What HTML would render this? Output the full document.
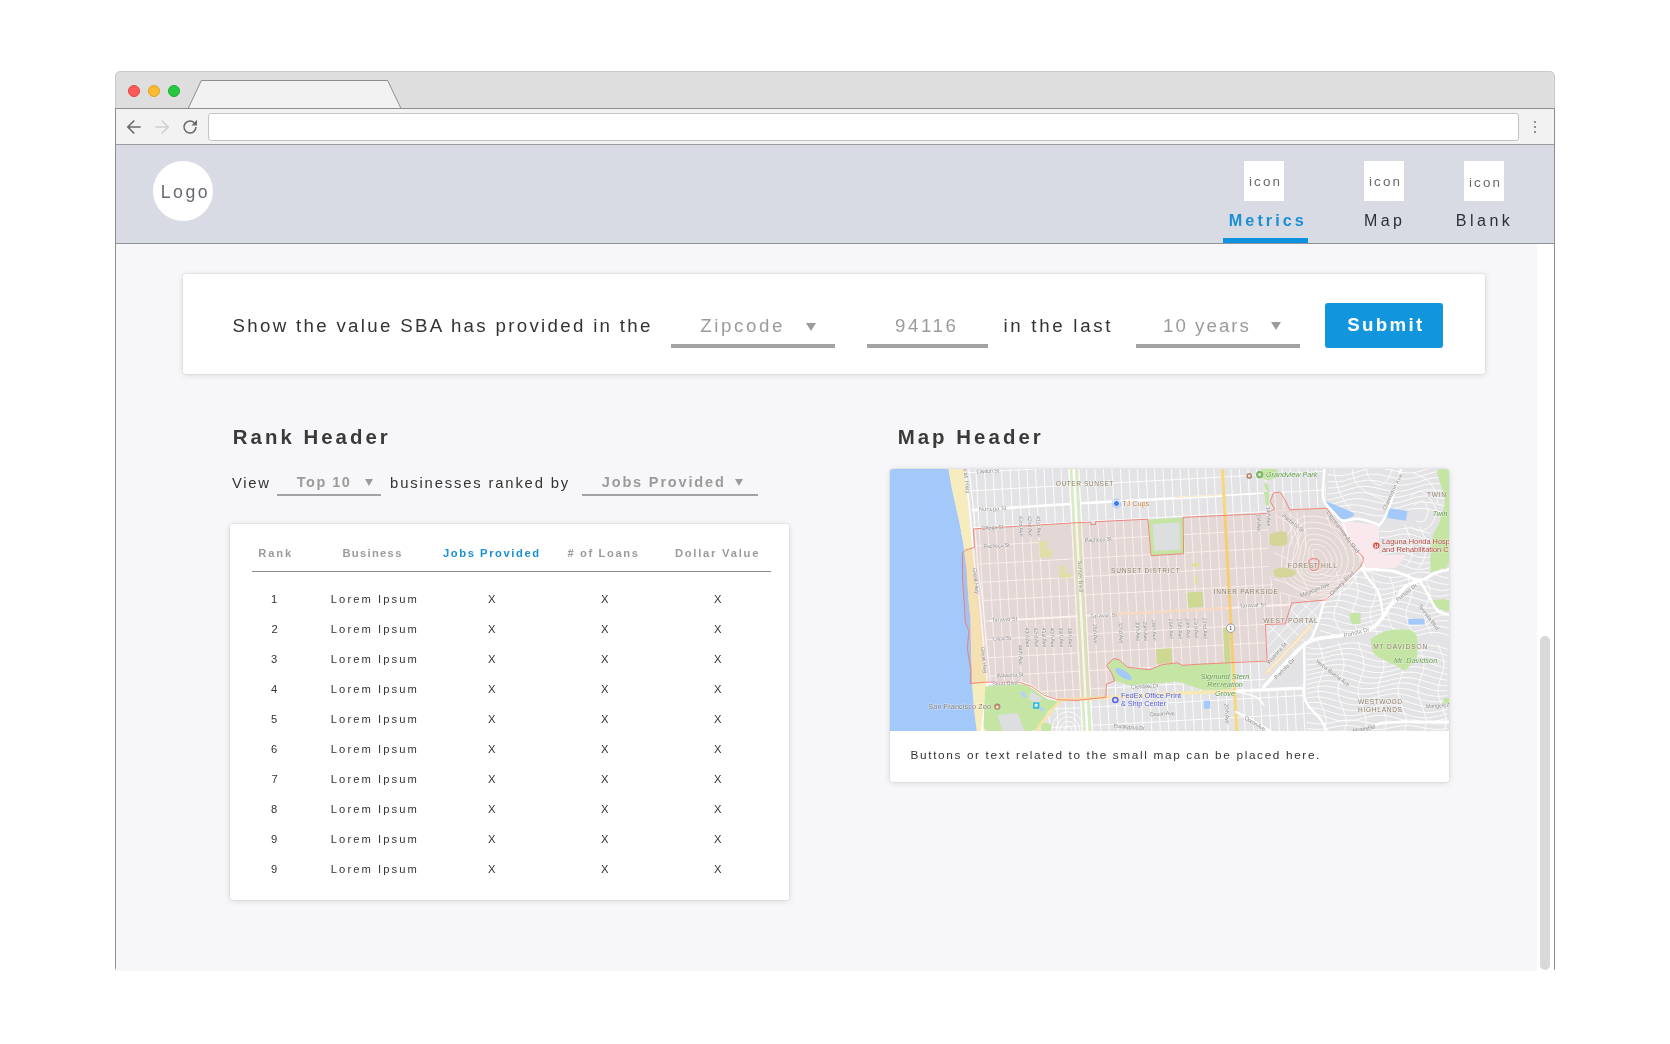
<!DOCTYPE html>
<html lang="en">
<head>
<meta charset="utf-8">
<title>SBA Metrics</title>
<style>
*{box-sizing:border-box;margin:0;padding:0}
html,body{width:1670px;height:1044px;background:#fff;overflow:hidden}
body{position:relative;font-family:"Liberation Sans",sans-serif;color:#333}
.abs{position:absolute}
.t{position:absolute;white-space:nowrap;line-height:1;}
/* browser frame */
#frame{position:absolute;left:115px;top:71px;width:1440px;height:899.6px;background:#f7f7f9;border-radius:5px 5px 2px 4px;overflow:hidden}
#bl,#br{position:absolute;top:37px;width:1px;height:862px;background:#8e8e8e;z-index:5}#bl{left:0}#br{left:1439px}
#tabbar{position:absolute;left:0;top:0;width:1440px;height:38px;background:#dedede;border:1px solid #c9c9c9;border-bottom:0;border-radius:5px 5px 0 0}
#toolbar{position:absolute;left:0;top:37px;width:1440px;height:37px;background:#f2f2f2;border-top:1px solid #8e8e8e;border-bottom:1px solid #9b9b9b}
#url{position:absolute;left:93px;top:4px;width:1311px;height:28px;background:#fff;border:1px solid #c4c4c4;border-radius:3px}
.dot{position:absolute;top:13px;width:12px;height:12px;border-radius:50%}
#nav{position:absolute;left:0;top:74px;width:1440px;height:99px;background:#d8dbe3;border-bottom:1px solid #8f9297}
#logo{position:absolute;left:38px;top:16px;width:60px;height:60px;border-radius:50%;background:#fff}
.ico{position:absolute;top:16px;width:40px;height:40px;background:#fff}
#uline{position:absolute;left:1108px;top:93px;width:85px;height:5px;background:#1093de}
#track{position:absolute;left:1422px;top:173px;width:17px;height:727px;background:#fff}
#thumb{position:absolute;left:1425px;top:565px;width:10px;height:334px;border-radius:5px;background:#d9d9d9}
.card{position:absolute;background:#fff;border-radius:3px;box-shadow:0 1px 6px rgba(0,0,0,.13),0 0 2px rgba(0,0,0,.12)}
.ul{position:absolute;background:#a3a3a3}
.tri{position:absolute;width:0;height:0;border-left:5px solid transparent;border-right:5px solid transparent;border-top:8px solid #9b9b9b}
.tri.s{border-left-width:4px;border-right-width:4px;border-top-width:7px}
#submit{position:absolute;left:1142px;top:29px;width:118px;height:45px;background:#1195dc;border-radius:3px}
</style>
</head>
<body>
<div id="frame">
  <div id="bl"></div><div id="br"></div>
  <div id="tabbar">
    <span class="dot" style="left:12px;background:#fc5b57;border:1px solid #e2443f"></span>
    <span class="dot" style="left:32px;background:#fdbc2e;border:1px solid #e0a028"></span>
    <span class="dot" style="left:52px;background:#27c840;border:1px solid #1fa831"></span>
    <svg class="abs" style="left:59px;top:0" width="240" height="38" viewBox="0 0 240 38"><path d="M13.2 36.5 L26.3 8.5 L212.6 8.5 L226 36.5 L240 36.5 L240 38 L0 38 L0 36.5Z" fill="#f2f2f2"/><path d="M0 36.5 L13.2 36.5 L26.3 8.5 L212.6 8.5 L226 36.5 L240 36.5" fill="none" stroke="#8e8e8e" stroke-width="1"/></svg>
  </div>
  <div id="toolbar">
    <svg class="abs" style="left:8px;top:6px" width="80" height="24" viewBox="0 0 80 24" fill="none" stroke-width="1.6">
      <path d="M17.7 12 H5.3 M11.3 5.5 L4.8 12 L11.3 18.5" stroke="#6a6a6a"/>
      <path d="M32.3 12 H44.7 M38.7 5.5 L45.2 12 L38.7 18.5" stroke="#cfcfcf"/>
      <path d="M71.5 8 A6 6 0 1 0 73 12" stroke="#6a6a6a"/>
      <path d="M74 4.8 V10.6 H68.4 Z" fill="#6a6a6a" stroke="none"/>
    </svg>
    <div id="url"></div>
    <svg class="abs" style="left:1417px;top:8px" width="6" height="20" viewBox="0 0 6 20"><circle cx="3" cy="5" r="1.1" fill="#777"/><circle cx="3" cy="10" r="1.1" fill="#777"/><circle cx="3" cy="15" r="1.1" fill="#777"/></svg>
  </div>
  <div id="nav">
    <div id="logo"></div>
    <div class="ico" style="left:1129px"></div>
    <div class="ico" style="left:1249px"></div>
    <div class="ico" style="left:1349px"></div>
    <div id="uline"></div>
  </div>
  <div id="track"></div>
  <div id="thumb"></div>
  <!-- filter card -->
  <div class="card" id="filter" style="left:68px;top:203px;width:1302px;height:100px">
    <div id="submit"></div>
  </div>
  <div class="card" id="rankcard" style="left:115px;top:453px;width:559px;height:376px"></div>
  <div class="card" id="mapcard" style="left:775px;top:397.5px;width:559px;height:313px;overflow:hidden">
  <svg class="abs" style="left:0;top:0;filter:blur(.35px)" width="559" height="262" viewBox="0 0 559 262" font-family="'Liberation Sans',sans-serif">
<defs>
<clipPath id="gc"><path d="M77.5 0.0 L434.0 0.0 L437.0 39.0 L400.0 41.0 L384.0 42.0 L378.0 48.0 L379.0 100.0 L384.0 120.0 L400.0 128.0 L402.0 134.0 L395.0 155.0 L376.0 156.0 L377.0 193.0 L374.0 222.0 L414.0 221.0 L416.0 262.0 L101.0 262.0 L99.0 214.0 L92.0 131.0 L83.5 60.0Z"/></clipPath>
<clipPath id="mc"><rect width="559" height="262"/></clipPath>
</defs>
<g clip-path="url(#mc)">
<rect width="559" height="262" fill="#e3e3e5"/>
<path d="M0.0 0.0 L58.4 0.0 L62.0 20.0 L65.9 37.7 L70.0 56.0 L73.4 75.3 L76.5 100.0 L78.5 131.0 L80.5 150.0 L81.0 180.0 L82.0 214.0 L84.0 240.0 L86.8 262.0 L0.0 262.0Z" fill="#a3c9fb"/>
<path d="M58.4 0.0 L62.0 20.0 L65.9 37.7 L70.0 56.0 L73.4 75.3 L76.5 100.0 L78.5 131.0 L80.5 150.0 L81.0 180.0 L82.0 214.0 L84.0 240.0 L86.8 262.0 L99.0 262.0 L97.0 214.0 L88.0 131.0 L80.5 60.0 L75.0 0.0Z" fill="#f6ecbe"/>
<path d="M75.3 0.0 L80.0 45.0 L85.0 100.0 L89.5 131.0 L94.0 180.0 L97.5 214.0" stroke="#fff" stroke-width="1.6" fill="none"/>
<path d="M79.0 0.0 L84.0 45.0 L88.0 100.0 L92.5 131.0 L97.0 180.0 L100.5 214.0" stroke="#fff" stroke-width="1.2" fill="none"/>
<path d="M97.5 214.0 C97.1 217.5 95.9 227.0 95.0 235.0 C94.1 243.0 92.5 257.5 92.0 262.0" stroke="#fff" stroke-width="2.2" fill="none"/>
<g clip-path="url(#gc)"><path d="M442.9 0L457.3 262M434.4 0L448.8 262M425.9 0L440.3 262M417.4 0L431.8 262M408.9 0L423.3 262M400.4 0L414.8 262M391.9 0L406.3 262M383.4 0L397.8 262M374.9 0L389.3 262M366.4 0L380.8 262M357.9 0L372.3 262M349.4 0L363.8 262M340.9 0L355.3 262M323.9 0L338.3 262M315.4 0L329.8 262M306.9 0L321.3 262M298.4 0L312.8 262M289.9 0L304.3 262M281.4 0L295.8 262M272.9 0L287.3 262M264.4 0L278.8 262M255.9 0L270.3 262M247.4 0L261.8 262M238.9 0L253.3 262M230.4 0L244.8 262M221.9 0L236.3 262M213.4 0L227.8 262M204.9 0L219.3 262M196.4 0L210.8 262M187.9 0L202.3 262M179.4 0L193.8 262M170.9 0L185.3 262M162.4 0L176.8 262M153.9 0L168.3 262M145.4 0L159.8 262M136.9 0L151.3 262M128.4 0L142.8 262M119.9 0L134.3 262M111.4 0L125.8 262M102.9 0L117.3 262M94.4 0L108.8 262M85.9 0L100.3 262M77.4 0L91.8 262M70 -32.6L440 -52.9M70 4.1L440 -16.2M70 22.4L440 2.1M70 40.9L440 20.6M70 59.4L440 39.1M70 77.8L440 57.5M70 96.1L440 75.8M70 114.4L440 94.1M70 132.8L440 112.5M70 153.3L440 133.0M70 172.1L440 151.8M70 190.4L440 170.1M70 208.7L440 188.4M70 227.0L440 206.7M70 245.3L440 225.0M70 263.6L440 243.3" stroke="#fff" stroke-width="1" fill="none" opacity=".85"/></g>
<path d="M149.1 55.8 L181.6 54.0 L183.6 89.1 L151.1 91.0Z" fill="#e3e3e5"/>
<path d="M159.6 91.9 L183.6 90.5 L184.6 107.4 L160.6 108.8Z" fill="#e3e3e5"/>
<clipPath id="wc"><path d="M378.0 157.0 L396.0 156.0 L403.0 135.0 L436.0 131.0 L430.0 150.0 L422.0 169.0 L415.0 176.0 L377.0 217.0 L377.0 194.0Z"/></clipPath>
<g clip-path="url(#wc)"><path d="M395.6 84.2L320.6 163.7M401.8 90.1L326.8 169.6M408.0 96.0L333.0 175.5M414.2 101.9L339.2 181.4M420.4 107.8L345.4 187.3M426.6 113.7L351.6 193.2M432.8 119.6L357.8 199.1M439.0 125.5L364.0 205.0M445.2 131.4L370.2 210.9M451.4 137.3L376.4 216.8M457.6 143.2L382.6 222.7M463.8 149.1L388.8 228.6M470.0 155.0L395.0 234.5M476.2 160.9L401.2 240.4M482.4 166.8L407.4 246.3M488.6 172.7L413.6 252.2M362.0 140.5L432.0 207.0M371.0 130.9L441.0 197.4M380.0 121.3L450.0 187.8M389.0 111.7L459.0 178.2M398.0 102.1L468.0 168.6M407.0 92.5L477.0 159.0M416.0 82.9L486.0 149.4M425.0 73.3L495.0 139.8M434.0 63.7L504.0 130.2" stroke="#fff" stroke-width="1" fill="none" opacity=".85"/></g>
<clipPath id="rc"><path d="M437.0 0.0 L559.0 0.0 L559.0 262.0 L416.0 262.0 L415.0 176.0 L422.0 169.0 L430.0 150.0 L436.0 131.0 L454.0 114.0 L473.0 93.0 L462.0 76.0 L437.0 39.0Z"/></clipPath>
<clipPath id="fc"><path d="M384.0 42.0 L437.0 39.0 L473.0 90.0 L436.0 131.0 L402.0 134.0 L384.0 120.0 L379.0 100.0 L378.0 48.0Z"/></clipPath>
<g clip-path="url(#rc)"><path id="cvy" d="M438.0 5.5 C439.7 5.7 444.7 6.7 448.0 6.8 C451.3 6.8 454.7 6.3 458.0 5.6 C461.3 4.9 464.7 3.6 468.0 2.6 C471.3 1.7 474.7 0.4 478.0 -0.2 C481.3 -0.8 484.7 -1.2 488.0 -1.1 C491.3 -1.0 494.7 -0.3 498.0 0.4 C501.3 1.0 504.7 2.1 508.0 2.7 C511.3 3.3 514.7 3.9 518.0 4.0 C521.3 4.0 524.7 3.5 528.0 2.8 C531.3 2.1 534.7 0.8 538.0 -0.2 C541.3 -1.1 544.7 -2.4 548.0 -3.0 C551.3 -3.6 556.3 -3.7 558.0 -3.9M438.0 12.4 C439.7 12.5 444.7 13.0 448.0 12.8 C451.3 12.5 454.7 11.6 458.0 10.7 C461.3 9.9 464.7 8.5 468.0 7.6 C471.3 6.6 474.7 5.7 478.0 5.3 C481.3 5.0 484.7 5.1 488.0 5.4 C491.3 5.8 494.7 6.7 498.0 7.4 C501.3 8.1 504.7 9.2 508.0 9.6 C511.3 10.0 514.7 10.2 518.0 10.0 C521.3 9.7 524.7 8.8 528.0 7.9 C531.3 7.1 534.7 5.7 538.0 4.8 C541.3 3.8 544.7 2.9 548.0 2.5 C551.3 2.2 556.3 2.6 558.0 2.6M438.0 19.0 C439.7 18.9 444.7 18.9 448.0 18.4 C451.3 17.8 454.7 16.6 458.0 15.7 C461.3 14.7 464.7 13.4 468.0 12.6 C471.3 11.9 474.7 11.3 478.0 11.2 C481.3 11.1 484.7 11.6 488.0 12.2 C491.3 12.8 494.7 13.9 498.0 14.6 C501.3 15.2 504.7 16.0 508.0 16.2 C511.3 16.4 514.7 16.1 518.0 15.6 C521.3 15.0 524.7 13.8 528.0 12.9 C531.3 11.9 534.7 10.6 538.0 9.8 C541.3 9.1 544.7 8.5 548.0 8.4 C551.3 8.3 556.3 9.2 558.0 9.4M438.0 25.2 C439.7 24.9 444.7 24.4 448.0 23.6 C451.3 22.9 454.7 21.5 458.0 20.6 C461.3 19.6 464.7 18.5 468.0 17.9 C471.3 17.4 474.7 17.3 478.0 17.5 C481.3 17.7 484.7 18.5 488.0 19.2 C491.3 19.9 494.7 21.0 498.0 21.5 C501.3 22.1 504.7 22.5 508.0 22.4 C511.3 22.3 514.7 21.6 518.0 20.8 C521.3 20.1 524.7 18.7 528.0 17.8 C531.3 16.8 534.7 15.7 538.0 15.1 C541.3 14.6 544.7 14.5 548.0 14.7 C551.3 14.9 556.3 16.1 558.0 16.4M438.0 31.0 C439.7 30.6 444.7 29.6 448.0 28.7 C451.3 27.8 454.7 26.4 458.0 25.5 C461.3 24.7 464.7 23.9 468.0 23.6 C471.3 23.4 474.7 23.7 478.0 24.1 C481.3 24.6 484.7 25.6 488.0 26.3 C491.3 27.0 494.7 28.0 498.0 28.3 C501.3 28.6 504.7 28.6 508.0 28.2 C511.3 27.8 514.7 26.8 518.0 25.9 C521.3 25.0 524.7 23.6 528.0 22.7 C531.3 21.9 534.7 21.1 538.0 20.8 C541.3 20.6 544.7 20.9 548.0 21.3 C551.3 21.8 556.3 23.2 558.0 23.5M438.0 36.5 C439.7 36.0 444.7 34.5 448.0 33.6 C451.3 32.6 454.7 31.3 458.0 30.7 C461.3 30.0 464.7 29.6 468.0 29.7 C471.3 29.7 474.7 30.4 478.0 31.0 C481.3 31.6 484.7 32.8 488.0 33.4 C491.3 34.0 494.7 34.7 498.0 34.7 C501.3 34.8 504.7 34.3 508.0 33.7 C511.3 33.0 514.7 31.7 518.0 30.8 C521.3 29.8 524.7 28.5 528.0 27.9 C531.3 27.2 534.7 26.8 538.0 26.9 C541.3 26.9 544.7 27.6 548.0 28.2 C551.3 28.8 556.3 30.2 558.0 30.6M438.0 41.6 C439.7 41.1 444.7 39.4 448.0 38.5 C451.3 37.6 454.7 36.6 458.0 36.2 C461.3 35.8 464.7 35.8 468.0 36.1 C471.3 36.4 474.7 37.4 478.0 38.1 C481.3 38.8 484.7 39.9 488.0 40.3 C491.3 40.8 494.7 41.0 498.0 40.8 C501.3 40.5 504.7 39.7 508.0 38.8 C511.3 38.0 514.7 36.6 518.0 35.7 C521.3 34.8 524.7 33.8 528.0 33.4 C531.3 33.0 534.7 33.0 538.0 33.3 C541.3 33.6 544.7 34.6 548.0 35.3 C551.3 36.0 556.3 37.1 558.0 37.5M438.0 46.6 C439.7 46.1 444.7 44.3 448.0 43.5 C451.3 42.8 454.7 42.1 458.0 42.0 C461.3 41.9 464.7 42.4 468.0 42.9 C471.3 43.4 474.7 44.5 478.0 45.2 C481.3 45.9 484.7 46.7 488.0 46.9 C491.3 47.1 494.7 47.0 498.0 46.4 C501.3 45.9 504.7 44.8 508.0 43.8 C511.3 42.9 514.7 41.5 518.0 40.7 C521.3 40.0 524.7 39.3 528.0 39.2 C531.3 39.1 534.7 39.6 538.0 40.1 C541.3 40.6 544.7 41.7 548.0 42.4 C551.3 43.1 556.3 43.8 558.0 44.1M462.0 0.0 C462.7 2.3 463.3 10.0 466.0 14.0 C468.7 18.0 473.7 21.3 478.0 24.0 C482.3 26.7 488.3 27.7 492.0 30.0 C495.7 32.3 498.7 36.7 500.0 38.0M444.0 0.0 C444.5 2.7 445.7 11.3 447.0 16.0 C448.3 20.7 449.8 24.0 452.0 28.0 C454.2 32.0 458.7 38.0 460.0 40.0M476.0 0.0 C476.7 1.7 477.7 7.3 480.0 10.0 C482.3 12.7 487.0 16.0 490.0 16.0 C493.0 16.0 496.0 12.7 498.0 10.0 C500.0 7.3 501.3 1.7 502.0 0.0M520.0 28.0 C521.7 27.0 526.7 21.7 530.0 22.0 C533.3 22.3 537.3 26.7 540.0 30.0 C542.7 33.3 545.8 37.7 546.0 42.0 C546.2 46.3 543.7 52.7 541.0 56.0 C538.3 59.3 533.3 61.7 530.0 62.0 C526.7 62.3 522.5 58.7 521.0 58.0M524.0 36.0 C525.5 35.3 530.7 31.0 533.0 32.0 C535.3 33.0 537.8 38.7 538.0 42.0 C538.2 45.3 536.0 50.3 534.0 52.0 C532.0 53.7 527.3 52.0 526.0 52.0M524.0 4.0 C526.0 5.0 532.7 7.3 536.0 10.0 C539.3 12.7 542.0 16.0 544.0 20.0 C546.0 24.0 547.3 31.7 548.0 34.0M490.0 62.1 C491.7 62.2 496.7 62.8 500.0 62.4 C503.3 62.1 506.7 60.7 510.0 60.1 C513.3 59.5 516.7 58.8 520.0 59.0 C523.3 59.2 526.7 60.4 530.0 61.4 C533.3 62.3 538.3 64.1 540.0 64.6M490.0 68.4 C491.7 68.3 496.7 68.3 500.0 67.8 C503.3 67.3 506.7 65.8 510.0 65.3 C513.3 64.9 516.7 64.7 520.0 65.2 C523.3 65.7 526.7 67.3 530.0 68.2 C533.3 69.2 538.3 70.5 540.0 70.9M490.0 74.5 C491.7 74.2 496.7 73.6 500.0 73.0 C503.3 72.3 506.7 71.0 510.0 70.8 C513.3 70.6 516.7 71.0 520.0 71.7 C523.3 72.4 526.7 74.2 530.0 75.1 C533.3 76.0 538.3 76.7 540.0 77.0M490.0 80.2 C491.7 79.9 496.7 78.7 500.0 78.1 C503.3 77.5 506.7 76.5 510.0 76.5 C513.3 76.6 516.7 77.5 520.0 78.4 C523.3 79.3 526.7 81.1 530.0 81.8 C533.3 82.5 538.3 82.6 540.0 82.7M490.0 85.7 C491.7 85.3 496.7 83.8 500.0 83.3 C503.3 82.7 506.7 82.2 510.0 82.6 C513.3 82.9 516.7 84.3 520.0 85.2 C523.3 86.2 526.7 87.8 530.0 88.3 C533.3 88.8 538.3 88.2 540.0 88.2M490.0 91.0 C491.7 90.6 496.7 88.9 500.0 88.6 C503.3 88.2 506.7 88.3 510.0 88.9 C513.3 89.5 516.7 91.1 520.0 92.1 C523.3 93.0 526.7 94.3 530.0 94.5 C533.3 94.7 538.3 93.6 540.0 93.5M490.0 96.1 C491.7 95.8 496.7 94.3 500.0 94.2 C503.3 94.0 506.7 94.7 510.0 95.4 C513.3 96.2 516.7 98.1 520.0 98.9 C523.3 99.7 526.7 100.5 530.0 100.4 C533.3 100.4 538.3 98.9 540.0 98.6M515.0 56.0 C515.8 58.3 518.8 65.0 520.0 70.0 C521.2 75.0 522.7 81.3 522.0 86.0 C521.3 90.7 517.0 96.0 516.0 98.0M530.0 58.0 C531.0 60.7 535.3 68.7 536.0 74.0 C536.7 79.3 535.3 85.7 534.0 90.0 C532.7 94.3 529.0 98.3 528.0 100.0M423.5 89.5 C423.3 88.1 421.2 82.2 422.5 81.0 C423.8 79.8 428.6 80.2 431.0 82.0 C433.4 83.8 436.6 88.5 437.0 91.5 C437.4 94.5 435.7 98.2 433.5 100.0 C431.3 101.8 426.2 102.6 424.0 102.5 C421.8 102.4 420.1 101.7 420.0 99.5 C419.9 97.3 422.9 91.2 423.5 89.5M419.0 87.0 C419.3 85.2 418.5 77.5 421.0 76.0 C423.5 74.5 430.5 75.5 434.0 78.0 C437.5 80.5 441.5 86.8 442.0 91.0 C442.5 95.2 440.0 100.5 437.0 103.0 C434.0 105.5 427.5 106.3 424.0 106.0 C420.5 105.7 416.8 104.2 416.0 101.0 C415.2 97.8 418.5 89.3 419.0 87.0M414.5 84.5 C415.3 82.2 415.8 72.8 419.5 71.0 C423.2 69.2 432.4 70.8 437.0 74.0 C441.6 77.2 446.4 85.2 447.0 90.5 C447.6 95.8 444.3 102.8 440.5 106.0 C436.7 109.2 428.8 110.1 424.0 109.5 C419.2 108.9 413.6 106.7 412.0 102.5 C410.4 98.3 414.1 87.5 414.5 84.5M410.0 82.0 C411.3 79.3 413.0 68.0 418.0 66.0 C423.0 64.0 434.3 66.0 440.0 70.0 C445.7 74.0 451.3 83.5 452.0 90.0 C452.7 96.5 448.7 105.2 444.0 109.0 C439.3 112.8 430.0 113.8 424.0 113.0 C418.0 112.2 410.3 109.2 408.0 104.0 C405.7 98.8 409.7 85.7 410.0 82.0M404.6 79.0 C406.5 75.8 409.7 62.3 416.2 60.0 C422.7 57.7 436.6 60.3 443.6 65.2 C450.6 70.1 457.2 81.5 458.0 89.4 C458.8 97.3 453.9 108.0 448.2 112.6 C442.5 117.2 431.5 118.3 424.0 117.2 C416.5 116.1 406.4 112.2 403.2 105.8 C400.0 99.4 404.4 83.5 404.6 79.0M399.2 76.0 C401.7 72.3 406.4 56.6 414.4 54.0 C422.4 51.4 438.9 54.6 447.2 60.4 C455.5 66.2 463.1 79.5 464.0 88.8 C464.9 98.1 459.1 110.8 452.4 116.2 C445.7 121.6 433.0 122.8 424.0 121.4 C415.0 120.0 402.5 115.2 398.4 107.6 C394.3 100.0 399.1 81.3 399.2 76.0M393.8 73.0 C396.9 68.8 403.1 50.9 412.6 48.0 C422.1 45.1 441.2 48.9 450.8 55.6 C460.4 62.3 469.0 77.5 470.0 88.2 C471.0 98.9 464.3 113.6 456.6 119.8 C448.9 126.0 434.5 127.3 424.0 125.6 C413.5 123.9 398.6 118.2 393.6 109.4 C388.6 100.6 393.8 79.1 393.8 73.0M388.0 48.0 C389.3 48.7 393.3 49.7 396.0 52.0 C398.7 54.3 402.0 58.0 404.0 62.0 C406.0 66.0 408.0 71.3 408.0 76.0 C408.0 80.7 406.0 86.3 404.0 90.0 C402.0 93.7 397.3 96.7 396.0 98.0M398.0 44.0 C399.7 45.3 405.0 48.7 408.0 52.0 C411.0 55.3 414.7 62.0 416.0 64.0M384.0 84.0 C385.7 84.7 390.7 86.0 394.0 88.0 C397.3 90.0 401.0 92.7 404.0 96.0 C407.0 99.3 409.7 104.0 412.0 108.0 C414.3 112.0 417.0 118.0 418.0 120.0M384.0 110.0 C386.0 110.7 391.7 112.3 396.0 114.0 C400.3 115.7 405.3 117.7 410.0 120.0 C414.7 122.3 421.7 126.7 424.0 128.0M392.0 124.0 C394.3 124.7 401.3 126.7 406.0 128.0 C410.7 129.3 417.7 131.3 420.0 132.0M436.0 44.0 C436.7 46.0 438.0 52.3 440.0 56.0 C442.0 59.7 445.3 62.0 448.0 66.0 C450.7 70.0 454.7 77.7 456.0 80.0M386.0 44L388.0 70M393.0 44L395.0 73M400.0 44L402.0 76M407.0 44L409.0 79M414.0 44L416.0 82M430.0 104.9 C431.7 105.3 436.7 106.9 440.0 107.1 C443.3 107.4 446.7 107.0 450.0 106.4 C453.3 105.9 456.7 104.5 460.0 103.7 C463.3 103.0 466.7 102.0 470.0 101.9 C473.3 101.7 476.7 102.3 480.0 103.0 C483.3 103.7 486.7 105.2 490.0 106.1 C493.3 107.0 496.7 108.1 500.0 108.3 C503.3 108.6 506.7 108.2 510.0 107.6 C513.3 107.1 516.7 105.7 520.0 104.9 C523.3 104.2 526.7 103.2 530.0 103.1 C533.3 102.9 536.7 103.5 540.0 104.2 C543.3 104.9 546.7 106.4 550.0 107.3 C553.3 108.2 558.3 109.2 560.0 109.5M430.0 112.2 C431.7 112.3 436.7 113.3 440.0 113.1 C443.3 112.9 446.7 111.9 450.0 111.1 C453.3 110.4 456.7 109.0 460.0 108.4 C463.3 107.9 466.7 107.6 470.0 107.9 C473.3 108.2 476.7 109.4 480.0 110.3 C483.3 111.2 486.7 112.7 490.0 113.4 C493.3 114.0 496.7 114.5 500.0 114.3 C503.3 114.1 506.7 113.1 510.0 112.3 C513.3 111.6 516.7 110.2 520.0 109.6 C523.3 109.1 526.7 108.8 530.0 109.1 C533.3 109.4 536.7 110.6 540.0 111.5 C543.3 112.4 546.7 113.9 550.0 114.6 C553.3 115.2 558.3 115.3 560.0 115.5M430.0 118.9 C431.7 118.8 436.7 118.9 440.0 118.3 C443.3 117.8 446.7 116.4 450.0 115.6 C453.3 114.9 456.7 113.9 460.0 113.7 C463.3 113.5 466.7 114.0 470.0 114.7 C473.3 115.3 476.7 116.8 480.0 117.8 C483.3 118.7 486.7 119.8 490.0 120.1 C493.3 120.4 496.7 120.1 500.0 119.5 C503.3 119.0 506.7 117.6 510.0 116.8 C513.3 116.1 516.7 115.1 520.0 114.9 C523.3 114.7 526.7 115.2 530.0 115.9 C533.3 116.5 536.7 118.0 540.0 119.0 C543.3 119.9 546.7 121.0 550.0 121.3 C553.3 121.6 558.3 120.8 560.0 120.7M430.0 124.9 C431.7 124.6 436.7 123.8 440.0 123.1 C443.3 122.3 446.7 120.9 450.0 120.3 C453.3 119.8 456.7 119.4 460.0 119.7 C463.3 119.9 466.7 121.0 470.0 121.9 C473.3 122.8 476.7 124.4 480.0 125.1 C483.3 125.7 486.7 126.3 490.0 126.1 C493.3 126.0 496.7 125.0 500.0 124.3 C503.3 123.5 506.7 122.1 510.0 121.5 C513.3 121.0 516.7 120.6 520.0 120.9 C523.3 121.1 526.7 122.2 530.0 123.1 C533.3 124.0 536.7 125.6 540.0 126.3 C543.3 126.9 546.7 127.5 550.0 127.3 C553.3 127.2 558.3 125.8 560.0 125.5M430.0 130.2 C431.7 129.8 436.7 128.4 440.0 127.6 C443.3 126.8 446.7 125.8 450.0 125.6 C453.3 125.3 456.7 125.7 460.0 126.4 C463.3 127.0 466.7 128.5 470.0 129.4 C473.3 130.3 476.7 131.5 480.0 131.8 C483.3 132.2 486.7 131.9 490.0 131.4 C493.3 130.9 496.7 129.6 500.0 128.8 C503.3 128.0 506.7 127.0 510.0 126.8 C513.3 126.5 516.7 126.9 520.0 127.6 C523.3 128.2 526.7 129.7 530.0 130.6 C533.3 131.5 536.7 132.7 540.0 133.0 C543.3 133.4 546.7 133.1 550.0 132.6 C553.3 132.1 558.3 130.4 560.0 130.0M430.0 135.0 C431.7 134.5 436.7 132.8 440.0 132.3 C443.3 131.7 446.7 131.2 450.0 131.4 C453.3 131.7 456.7 132.7 460.0 133.6 C463.3 134.5 466.7 136.0 470.0 136.7 C473.3 137.5 476.7 138.0 480.0 138.0 C483.3 137.9 486.7 137.0 490.0 136.2 C493.3 135.5 496.7 134.0 500.0 133.5 C503.3 132.9 506.7 132.4 510.0 132.6 C513.3 132.9 516.7 133.9 520.0 134.8 C523.3 135.7 526.7 137.2 530.0 137.9 C533.3 138.7 536.7 139.2 540.0 139.2 C543.3 139.1 546.7 138.2 550.0 137.4 C553.3 136.7 558.3 135.1 560.0 134.7M430.0 139.5 C431.7 139.2 436.7 137.6 440.0 137.4 C443.3 137.2 446.7 137.5 450.0 138.1 C453.3 138.7 456.7 140.2 460.0 141.1 C463.3 142.0 466.7 143.2 470.0 143.6 C473.3 144.0 476.7 143.8 480.0 143.3 C483.3 142.8 486.7 141.5 490.0 140.7 C493.3 139.9 496.7 138.8 500.0 138.6 C503.3 138.4 506.7 138.7 510.0 139.3 C513.3 139.9 516.7 141.4 520.0 142.3 C523.3 143.2 526.7 144.4 530.0 144.8 C533.3 145.2 536.7 145.0 540.0 144.5 C543.3 144.0 546.7 142.7 550.0 141.9 C553.3 141.1 558.3 140.2 560.0 139.8M430.0 144.2 C431.7 144.0 436.7 143.0 440.0 143.2 C443.3 143.4 446.7 144.4 450.0 145.3 C453.3 146.1 456.7 147.7 460.0 148.4 C463.3 149.2 466.7 149.8 470.0 149.8 C473.3 149.7 476.7 148.9 480.0 148.1 C483.3 147.4 486.7 146.0 490.0 145.4 C493.3 144.7 496.7 144.2 500.0 144.4 C503.3 144.6 506.7 145.6 510.0 146.5 C513.3 147.3 516.7 148.9 520.0 149.6 C523.3 150.4 526.7 151.0 530.0 151.0 C533.3 150.9 536.7 150.1 540.0 149.3 C543.3 148.6 546.7 147.2 550.0 146.6 C553.3 145.9 558.3 145.8 560.0 145.6M430.0 149.3 C431.7 149.3 436.7 149.2 440.0 149.8 C443.3 150.4 446.7 151.8 450.0 152.7 C453.3 153.7 456.7 154.9 460.0 155.3 C463.3 155.8 466.7 155.7 470.0 155.2 C473.3 154.8 476.7 153.5 480.0 152.7 C483.3 151.9 486.7 150.7 490.0 150.5 C493.3 150.2 496.7 150.4 500.0 151.0 C503.3 151.6 506.7 153.0 510.0 153.9 C513.3 154.9 516.7 156.1 520.0 156.5 C523.3 157.0 526.7 156.9 530.0 156.4 C533.3 156.0 536.7 154.7 540.0 153.9 C543.3 153.1 546.7 151.9 550.0 151.7 C553.3 151.4 558.3 152.1 560.0 152.2M430.0 155.0 C431.7 155.3 436.7 156.1 440.0 156.9 C443.3 157.8 446.7 159.3 450.0 160.1 C453.3 160.9 456.7 161.6 460.0 161.6 C463.3 161.6 466.7 160.8 470.0 160.1 C473.3 159.3 476.7 157.9 480.0 157.3 C483.3 156.6 486.7 156.1 490.0 156.2 C493.3 156.4 496.7 157.3 500.0 158.1 C503.3 159.0 506.7 160.5 510.0 161.3 C513.3 162.1 516.7 162.8 520.0 162.8 C523.3 162.8 526.7 162.0 530.0 161.3 C533.3 160.5 536.7 159.1 540.0 158.5 C543.3 157.8 546.7 157.3 550.0 157.4 C553.3 157.6 558.3 159.0 560.0 159.3M430.0 161.5 C431.7 162.0 436.7 163.5 440.0 164.4 C443.3 165.3 446.7 166.6 450.0 167.1 C453.3 167.5 456.7 167.5 460.0 167.1 C463.3 166.7 466.7 165.4 470.0 164.6 C473.3 163.8 476.7 162.6 480.0 162.3 C483.3 162.0 486.7 162.2 490.0 162.7 C493.3 163.2 496.7 164.7 500.0 165.6 C503.3 166.5 506.7 167.8 510.0 168.3 C513.3 168.7 516.7 168.7 520.0 168.3 C523.3 167.9 526.7 166.6 530.0 165.8 C533.3 165.0 536.7 163.8 540.0 163.5 C543.3 163.2 546.7 163.4 550.0 163.9 C553.3 164.4 558.3 166.3 560.0 166.8M446.0 102.0 C446.7 105.7 450.3 116.7 450.0 124.0 C449.7 131.3 443.7 139.0 444.0 146.0 C444.3 153.0 450.7 162.7 452.0 166.0M464.0 104.0 C464.7 107.3 468.3 117.0 468.0 124.0 C467.7 131.0 461.7 139.0 462.0 146.0 C462.3 153.0 468.7 162.7 470.0 166.0M482.0 106.0 C482.7 109.0 486.3 117.3 486.0 124.0 C485.7 130.7 479.7 139.0 480.0 146.0 C480.3 153.0 486.7 162.7 488.0 166.0M500.0 108.0 C500.7 110.7 504.3 117.7 504.0 124.0 C503.7 130.3 497.7 139.0 498.0 146.0 C498.3 153.0 504.7 162.7 506.0 166.0M518.0 110.0 C518.7 112.3 522.3 118.0 522.0 124.0 C521.7 130.0 515.7 139.0 516.0 146.0 C516.3 153.0 522.7 162.7 524.0 166.0M536.0 112.0 C536.7 114.0 540.3 118.3 540.0 124.0 C539.7 129.7 533.7 139.0 534.0 146.0 C534.3 153.0 540.7 162.7 542.0 166.0M417.0 178.5 C418.7 178.7 423.7 179.8 427.0 179.8 C430.3 179.8 433.7 179.3 437.0 178.8 C440.3 178.2 443.7 177.1 447.0 176.3 C450.3 175.5 453.7 174.6 457.0 174.2 C460.3 173.9 463.7 173.8 467.0 174.1 C470.3 174.5 473.7 175.4 477.0 176.3 C480.3 177.1 483.7 178.5 487.0 179.4 C490.3 180.3 493.7 181.3 497.0 181.7 C500.3 182.1 503.7 182.1 507.0 181.8 C510.3 181.5 513.7 180.6 517.0 179.9 C520.3 179.1 523.7 178.0 527.0 177.4 C530.3 176.7 533.7 176.2 537.0 176.1 C540.3 176.1 543.7 176.6 547.0 177.2 C550.3 177.9 555.3 179.6 557.0 180.1M417.0 184.6 C418.7 184.7 423.7 185.3 427.0 185.1 C430.3 184.9 433.7 184.1 437.0 183.4 C440.3 182.6 443.7 181.5 447.0 180.8 C450.3 180.1 453.7 179.4 457.0 179.3 C460.3 179.2 463.7 179.5 467.0 180.1 C470.3 180.6 473.7 181.8 477.0 182.8 C480.3 183.7 483.7 185.0 487.0 185.8 C490.3 186.6 493.7 187.3 497.0 187.4 C500.3 187.5 503.7 187.2 507.0 186.7 C510.3 186.2 513.7 185.1 517.0 184.3 C520.3 183.5 523.7 182.5 527.0 182.1 C530.3 181.6 533.7 181.4 537.0 181.6 C540.3 181.9 543.7 182.7 547.0 183.5 C550.3 184.3 555.3 186.1 557.0 186.6M417.0 190.4 C418.7 190.4 423.7 190.5 427.0 190.0 C430.3 189.6 433.7 188.6 437.0 187.8 C440.3 187.1 443.7 186.0 447.0 185.5 C450.3 184.9 453.7 184.6 457.0 184.7 C460.3 184.8 463.7 185.5 467.0 186.3 C470.3 187.0 473.7 188.3 477.0 189.3 C480.3 190.3 483.7 191.4 487.0 192.0 C490.3 192.6 493.7 192.9 497.0 192.8 C500.3 192.7 503.7 192.0 507.0 191.3 C510.3 190.7 513.7 189.5 517.0 188.8 C520.3 188.1 523.7 187.3 527.0 187.0 C530.3 186.8 533.7 187.0 537.0 187.5 C540.3 187.9 543.7 189.0 547.0 189.9 C550.3 190.9 555.3 192.5 557.0 193.1M417.0 196.0 C418.7 195.8 423.7 195.4 427.0 194.8 C430.3 194.2 433.7 193.0 437.0 192.3 C440.3 191.5 443.7 190.6 447.0 190.3 C450.3 190.0 453.7 190.0 457.0 190.4 C460.3 190.8 463.7 191.8 467.0 192.7 C470.3 193.6 473.7 194.9 477.0 195.8 C480.3 196.7 483.7 197.6 487.0 198.0 C490.3 198.3 493.7 198.2 497.0 197.9 C500.3 197.5 503.7 196.6 507.0 195.8 C510.3 195.1 513.7 194.0 517.0 193.4 C520.3 192.8 523.7 192.3 527.0 192.3 C530.3 192.3 533.7 192.9 537.0 193.6 C540.3 194.3 543.7 195.5 547.0 196.5 C550.3 197.5 555.3 198.9 557.0 199.4M417.0 201.2 C418.7 200.9 423.7 200.1 427.0 199.3 C430.3 198.6 433.7 197.5 437.0 196.8 C440.3 196.2 443.7 195.5 447.0 195.5 C450.3 195.4 453.7 195.8 457.0 196.4 C460.3 197.0 463.7 198.2 467.0 199.2 C470.3 200.1 473.7 201.4 477.0 202.2 C480.3 202.9 483.7 203.5 487.0 203.6 C490.3 203.7 493.7 203.3 497.0 202.7 C500.3 202.2 503.7 201.1 507.0 200.3 C510.3 199.5 513.7 198.5 517.0 198.1 C520.3 197.7 523.7 197.6 527.0 197.9 C530.3 198.2 533.7 199.0 537.0 199.9 C540.3 200.7 543.7 202.1 547.0 203.0 C550.3 203.9 555.3 205.0 557.0 205.4M417.0 206.1 C418.7 205.7 423.7 204.6 427.0 203.8 C430.3 203.0 433.7 202.0 437.0 201.5 C440.3 201.0 443.7 200.7 447.0 200.9 C450.3 201.1 453.7 201.8 457.0 202.6 C460.3 203.4 463.7 204.8 467.0 205.7 C470.3 206.7 473.7 207.8 477.0 208.3 C480.3 208.9 483.7 209.1 487.0 208.9 C490.3 208.8 493.7 208.0 497.0 207.3 C500.3 206.6 503.7 205.5 507.0 204.8 C510.3 204.1 513.7 203.3 517.0 203.2 C520.3 203.0 523.7 203.2 527.0 203.8 C530.3 204.3 533.7 205.4 537.0 206.4 C540.3 207.3 543.7 208.6 547.0 209.4 C550.3 210.2 555.3 210.9 557.0 211.2M417.0 210.8 C418.7 210.4 423.7 209.0 427.0 208.3 C430.3 207.5 433.7 206.7 437.0 206.4 C440.3 206.2 443.7 206.2 447.0 206.7 C450.3 207.1 453.7 208.1 457.0 209.1 C460.3 210.0 463.7 211.3 467.0 212.2 C470.3 213.1 473.7 213.9 477.0 214.2 C480.3 214.5 483.7 214.4 487.0 214.0 C490.3 213.6 493.7 212.6 497.0 211.8 C500.3 211.1 503.7 210.0 507.0 209.4 C510.3 208.9 513.7 208.4 517.0 208.5 C520.3 208.6 523.7 209.2 527.0 209.9 C530.3 210.6 533.7 211.9 537.0 212.9 C540.3 213.9 543.7 215.1 547.0 215.7 C550.3 216.3 555.3 216.5 557.0 216.6M417.0 215.3 C418.7 214.9 423.7 213.5 427.0 212.8 C430.3 212.2 433.7 211.7 437.0 211.6 C440.3 211.6 443.7 212.1 447.0 212.7 C450.3 213.4 453.7 214.6 457.0 215.6 C460.3 216.6 463.7 217.8 467.0 218.5 C470.3 219.2 473.7 219.8 477.0 219.8 C480.3 219.8 483.7 219.3 487.0 218.7 C490.3 218.2 493.7 217.0 497.0 216.3 C500.3 215.5 503.7 214.6 507.0 214.2 C510.3 213.9 513.7 213.8 517.0 214.1 C520.3 214.5 523.7 215.4 527.0 216.3 C530.3 217.2 533.7 218.5 537.0 219.4 C540.3 220.3 543.7 221.3 547.0 221.7 C550.3 222.1 555.3 221.8 557.0 221.8M417.0 219.8 C418.7 219.4 423.7 218.0 427.0 217.6 C430.3 217.1 433.7 216.9 437.0 217.1 C440.3 217.4 443.7 218.2 447.0 219.0 C450.3 219.8 453.7 221.2 457.0 222.1 C460.3 223.1 463.7 224.1 467.0 224.6 C470.3 225.1 473.7 225.3 477.0 225.1 C480.3 224.8 483.7 224.0 487.0 223.3 C490.3 222.6 493.7 221.5 497.0 220.8 C500.3 220.1 503.7 219.4 507.0 219.3 C510.3 219.2 513.7 219.5 517.0 220.1 C520.3 220.7 523.7 221.8 527.0 222.8 C530.3 223.7 533.7 225.0 537.0 225.8 C540.3 226.6 543.7 227.3 547.0 227.4 C550.3 227.5 555.3 226.8 557.0 226.7M417.0 224.3 C418.7 224.0 423.7 222.8 427.0 222.5 C430.3 222.3 433.7 222.5 437.0 223.0 C440.3 223.5 443.7 224.5 447.0 225.5 C450.3 226.4 453.7 227.8 457.0 228.6 C460.3 229.4 463.7 230.2 467.0 230.5 C470.3 230.7 473.7 230.5 477.0 230.0 C480.3 229.6 483.7 228.6 487.0 227.8 C490.3 227.0 493.7 226.0 497.0 225.4 C500.3 224.9 503.7 224.6 507.0 224.7 C510.3 224.8 513.7 225.5 517.0 226.3 C520.3 227.0 523.7 228.4 527.0 229.3 C530.3 230.3 533.7 231.4 537.0 232.0 C540.3 232.6 543.7 232.9 547.0 232.8 C550.3 232.7 555.3 231.6 557.0 231.3M417.0 228.9 C418.7 228.7 423.7 227.8 427.0 227.8 C430.3 227.8 433.7 228.4 437.0 229.1 C440.3 229.8 443.7 231.0 447.0 232.0 C450.3 233.0 453.7 234.2 457.0 234.9 C460.3 235.5 463.7 236.0 467.0 236.0 C470.3 236.0 473.7 235.4 477.0 234.8 C480.3 234.2 483.7 233.0 487.0 232.3 C490.3 231.5 493.7 230.6 497.0 230.3 C500.3 230.0 503.7 230.0 507.0 230.4 C510.3 230.8 513.7 231.8 517.0 232.7 C520.3 233.6 523.7 234.9 527.0 235.8 C530.3 236.7 533.7 237.6 537.0 238.0 C540.3 238.3 543.7 238.2 547.0 237.9 C550.3 237.5 555.3 236.2 557.0 235.8M417.0 233.6 C418.7 233.6 423.7 233.1 427.0 233.4 C430.3 233.7 433.7 234.5 437.0 235.4 C440.3 236.3 443.7 237.6 447.0 238.5 C450.3 239.5 453.7 240.5 457.0 240.9 C460.3 241.4 463.7 241.4 467.0 241.2 C470.3 240.9 473.7 240.1 477.0 239.3 C480.3 238.6 483.7 237.4 487.0 236.8 C490.3 236.2 493.7 235.5 497.0 235.5 C500.3 235.4 503.7 235.8 507.0 236.4 C510.3 237.0 513.7 238.2 517.0 239.2 C520.3 240.2 523.7 241.4 527.0 242.2 C530.3 242.9 533.7 243.5 537.0 243.6 C540.3 243.7 543.7 243.3 547.0 242.7 C550.3 242.1 555.3 240.7 557.0 240.3M417.0 238.7 C418.7 238.8 423.7 238.7 427.0 239.3 C430.3 239.8 433.7 240.9 437.0 241.9 C440.3 242.8 443.7 244.2 447.0 245.0 C450.3 245.8 453.7 246.5 457.0 246.7 C460.3 246.9 463.7 246.6 467.0 246.1 C470.3 245.6 473.7 244.6 477.0 243.8 C480.3 243.0 483.7 242.0 487.0 241.5 C490.3 241.0 493.7 240.7 497.0 240.9 C500.3 241.1 503.7 241.8 507.0 242.6 C510.3 243.5 513.7 244.8 517.0 245.7 C520.3 246.7 523.7 247.8 527.0 248.3 C530.3 248.9 533.7 249.1 537.0 248.9 C540.3 248.8 543.7 248.0 547.0 247.3 C550.3 246.6 555.3 245.2 557.0 244.8M417.0 244.0 C418.7 244.2 423.7 244.7 427.0 245.4 C430.3 246.2 433.7 247.5 437.0 248.4 C440.3 249.4 443.7 250.6 447.0 251.2 C450.3 251.8 453.7 252.2 457.0 252.1 C460.3 252.1 463.7 251.4 467.0 250.8 C470.3 250.1 473.7 249.0 477.0 248.3 C480.3 247.5 483.7 246.7 487.0 246.4 C490.3 246.2 493.7 246.2 497.0 246.7 C500.3 247.1 503.7 248.2 507.0 249.1 C510.3 250.0 513.7 251.4 517.0 252.2 C520.3 253.1 523.7 253.9 527.0 254.2 C530.3 254.5 533.7 254.4 537.0 254.0 C540.3 253.6 543.7 252.6 547.0 251.8 C550.3 251.0 555.3 249.8 557.0 249.4M417.0 253.4 C418.7 253.6 423.7 254.7 427.0 254.9 C430.3 255.1 433.7 254.9 437.0 254.5 C440.3 254.1 443.7 253.2 447.0 252.6 C450.3 252.0 453.7 251.3 457.0 251.1 C460.3 250.9 463.7 251.1 467.0 251.5 C470.3 251.9 473.7 252.8 477.0 253.4 C480.3 254.0 483.7 254.7 487.0 254.9 C490.3 255.1 493.7 254.9 497.0 254.5 C500.3 254.1 503.7 253.2 507.0 252.6 C510.3 252.0 513.7 251.3 517.0 251.1 C520.3 250.9 523.7 251.1 527.0 251.5 C530.3 251.9 533.7 252.8 537.0 253.4 C540.3 254.0 543.7 254.7 547.0 254.9 C550.3 255.1 555.3 254.6 557.0 254.5M417.0 259.5 C418.7 259.7 423.7 260.5 427.0 260.5 C430.3 260.5 433.7 260.0 437.0 259.5 C440.3 258.9 443.7 257.9 447.0 257.5 C450.3 257.0 453.7 256.5 457.0 256.5 C460.3 256.5 463.7 257.0 467.0 257.5 C470.3 258.1 473.7 259.1 477.0 259.5 C480.3 260.0 483.7 260.5 487.0 260.5 C490.3 260.5 493.7 260.0 497.0 259.5 C500.3 258.9 503.7 257.9 507.0 257.5 C510.3 257.0 513.7 256.5 517.0 256.5 C520.3 256.5 523.7 257.0 527.0 257.5 C530.3 258.1 533.7 259.1 537.0 259.5 C540.3 260.0 543.7 260.5 547.0 260.5 C550.3 260.5 555.3 259.6 557.0 259.5M417.0 265.6 C418.7 265.6 423.7 266.1 427.0 265.9 C430.3 265.6 433.7 264.9 437.0 264.3 C440.3 263.7 443.7 262.8 447.0 262.4 C450.3 262.1 453.7 261.9 457.0 262.1 C460.3 262.4 463.7 263.1 467.0 263.7 C470.3 264.3 473.7 265.2 477.0 265.6 C480.3 265.9 483.7 266.1 487.0 265.9 C490.3 265.6 493.7 264.9 497.0 264.3 C500.3 263.7 503.7 262.8 507.0 262.4 C510.3 262.1 513.7 261.9 517.0 262.1 C520.3 262.4 523.7 263.1 527.0 263.7 C530.3 264.3 533.7 265.2 537.0 265.6 C540.3 265.9 543.7 266.1 547.0 265.9 C550.3 265.6 555.3 264.6 557.0 264.3M428.0 172.0 C429.0 176.0 434.0 187.7 434.0 196.0 C434.0 204.3 427.7 213.0 428.0 222.0 C428.3 231.0 435.0 243.3 436.0 250.0 C437.0 256.7 434.3 260.0 434.0 262.0M448.0 172.5 C449.0 176.4 454.0 187.8 454.0 196.0 C454.0 204.2 447.7 213.0 448.0 222.0 C448.3 231.0 455.0 243.3 456.0 250.0 C457.0 256.7 454.3 260.0 454.0 262.0M468.0 173.0 C469.0 176.8 474.0 187.8 474.0 196.0 C474.0 204.2 467.7 213.0 468.0 222.0 C468.3 231.0 475.0 243.3 476.0 250.0 C477.0 256.7 474.3 260.0 474.0 262.0M488.0 173.5 C489.0 177.2 494.0 187.9 494.0 196.0 C494.0 204.1 487.7 213.0 488.0 222.0 C488.3 231.0 495.0 243.3 496.0 250.0 C497.0 256.7 494.3 260.0 494.0 262.0M508.0 174.0 C509.0 177.7 514.0 188.0 514.0 196.0 C514.0 204.0 507.7 213.0 508.0 222.0 C508.3 231.0 515.0 243.3 516.0 250.0 C517.0 256.7 514.3 260.0 514.0 262.0M528.0 174.5 C529.0 178.1 534.0 188.1 534.0 196.0 C534.0 203.9 527.7 213.0 528.0 222.0 C528.3 231.0 535.0 243.3 536.0 250.0 C537.0 256.7 534.3 260.0 534.0 262.0M548.0 175.0 C549.0 178.5 554.0 188.2 554.0 196.0 C554.0 203.8 547.7 213.0 548.0 222.0 C548.3 231.0 555.0 243.3 556.0 250.0 C557.0 256.7 554.3 260.0 554.0 262.0M174.0 262A4 4.8 0 0 1 182.0 262M170.0 262A8 9.6 0 0 1 186.0 262M166.0 262A12 14.4 0 0 1 190.0 262M162.0 262A16 19.2 0 0 1 194.0 262" stroke="#fff" stroke-width="1" fill="none" opacity=".85" stroke-linecap="round"/></g>
<g clip-path="url(#fc)"><use href="#cvy"/></g>
<path d="M174.0 262A4 4.8 0 0 1 182.0 262M170.0 262A8 9.6 0 0 1 186.0 262M166.0 262A12 14.4 0 0 1 190.0 262M162.0 262A16 19.2 0 0 1 194.0 262" stroke="#fff" stroke-width="1" fill="none" opacity=".85"/>
<path d="M258.5 50.5 L293.0 48.5 L293.7 84.7 L261.0 86.4Z" fill="#c5e5a5" />
<path d="M262.5 55.0 L289.5 53.5 L290.0 80.5 L264.5 82.0Z" fill="#dcdee0" />
<path d="M149.0 72.0 L157.0 71.5 L157.5 81.0 L162.0 80.7 L162.5 88.0 L150.0 88.7Z" fill="#e0ebb2" />
<path d="M169.0 97.0 L175.0 96.7 L175.4 104.0 L181.0 103.8 L181.2 108.5 L169.5 109.0Z" fill="#e0ebb2" />
<path d="M301.8 94.0 L310.0 93.6 L310.2 97.5 L302.0 98.0Z" fill="#e0ebb2" />
<path d="M304.5 106.5 L307.5 106.3 L308.0 115.5 L305.0 115.7Z" fill="#e0ebb2" />
<path d="M297.4 123.5 L312.5 122.7 L313.0 138.0 L298.0 138.8Z" fill="#cbe39c" />
<path d="M266.0 180.0 L281.8 179.2 L282.2 194.0 L266.5 195.0Z" fill="#cbe39c" />
<path d="M333.0 159.0 L339.0 158.7 L340.5 193.5 L334.5 193.8Z" fill="#cbe39c" />
<path d="M217.2 196.3 L224.0 189.7 L229.7 191.5 L237.2 198.4 L247.2 199.7 L259.8 201.0 L272.3 195.9 L287.4 194.1 L292.4 196.6 L312.5 195.3 L340.7 193.8 L341.4 220.7 L312.5 220.7 L287.4 212.6 L274.8 213.8 L239.7 216.3 L224.7 212.0 L221.5 203.8Z" fill="#c5e5a5" />
<ellipse cx="233.4" cy="205" rx="9.5" ry="3.6" transform="rotate(32 233.4 205)" fill="#a3c9fb"/>
<path d="M95.4 217.6 C101.2 217.2 122.3 214.7 130.5 215.1 C138.7 215.5 139.9 217.6 144.3 220.1 C148.7 222.6 152.9 228.0 156.9 230.1 C160.9 232.2 168.2 230.4 168.2 232.7 C168.2 235.0 159.8 240.0 156.9 244.0 C154.0 248.0 153.8 253.5 150.6 256.5 C147.4 259.5 146.8 261.1 138.0 262.0 C129.2 262.9 105.2 265.0 97.9 262.0 C90.6 259.0 94.5 251.4 94.1 244.0 C93.7 236.6 95.2 222.0 95.4 217.6Z" fill="#c5e5a5"/>
<path d="M108.0 246.0 L128.0 244.0 L134.0 262.0 L112.0 262.0Z" fill="#dcdee0" />
<path d="M140.0 222.0 L152.0 229.0 L148.0 236.0 L139.0 230.0Z" fill="#dcdee0" />
<path d="M130.0 223.0 L134.0 222.5 L137.0 228.0 L133.0 229.0Z" fill="#b4d2f5" />
<path d="M150.0 237.0 L154.0 240.0 L153.0 243.0 L150.0 241.0Z" fill="#b4d2f5" />
<circle cx="156" cy="259" r="5.5" fill="#c5e5a5"/>
<path d="M380.0 65.0 C381.3 64.6 385.2 62.9 388.0 62.7 C390.8 62.5 395.2 62.0 396.6 64.0 C398.0 66.0 398.0 72.8 396.6 75.0 C395.2 77.2 390.8 77.0 388.0 77.0 C385.2 77.0 381.3 77.0 380.0 75.0 C378.7 73.0 380.0 66.7 380.0 65.0Z" fill="#d3e0a4"/>
<path d="M383.4 101.0 C384.8 100.6 388.3 98.3 392.0 98.5 C395.7 98.7 403.6 100.6 405.4 102.0 C407.2 103.4 405.2 105.9 403.0 107.0 C400.8 108.1 395.0 108.5 392.0 108.5 C389.0 108.5 386.4 108.2 385.0 107.0 C383.6 105.8 383.7 102.0 383.4 101.0Z" fill="#d3e0a4"/>
<path d="M374.0 23.0 L379.0 22.6 L379.0 36.0 L376.0 37.0Z" fill="#c5e5a5" />
<path d="M551.0 0.0 C552.3 0.0 557.7 -2.0 559.0 0.0 C560.3 2.0 560.0 10.5 559.0 12.0 C558.0 13.5 554.3 11.0 553.0 9.0 C551.7 7.0 551.3 1.5 551.0 0.0Z" fill="#c5e5a5"/>
<path d="M371.0 0.0 C373.5 0.0 383.5 -1.3 386.0 0.0 C388.5 1.3 387.3 6.2 386.0 8.0 C384.7 9.8 380.3 11.0 378.0 11.0 C375.7 11.0 373.2 9.8 372.0 8.0 C370.8 6.2 371.2 1.3 371.0 0.0Z" fill="#c5e5a5"/>
<path d="M374.0 13.0 C374.7 13.5 377.2 14.5 378.0 16.0 C378.8 17.5 379.4 21.3 379.0 22.0 C378.6 22.7 376.3 21.5 375.5 20.0 C374.7 18.5 374.2 14.2 374.0 13.0Z" fill="#c5e5a5"/>
<path d="M452.0 52.0 L486.0 56.0 L489.0 58.0 L489.0 86.0 L516.0 86.0 L505.8 99.1 L473.1 99.1 L473.1 87.9 L461.9 76.6 L450.6 59.0Z" fill="#f9e8ec" />
<path d="M435.5 32.0 C437.8 33.0 444.7 35.7 449.3 37.7 C453.9 39.7 461.0 42.2 463.1 43.9 C465.2 45.6 463.8 46.7 461.9 47.7 C460.0 48.8 454.7 51.0 451.8 50.2 C448.9 49.4 446.9 45.1 444.3 42.7 C441.7 40.3 437.5 37.8 436.0 36.0 C434.5 34.2 435.6 32.7 435.5 32.0Z" fill="#a3c9fb"/>
<path d="M498.0 39.0 L517.5 42.0 L516.0 51.8 L497.0 49.0Z" fill="#a3c9fb" />
<path d="M549.5 4.5 C550.2 4.3 552.5 3.4 554.0 3.5 C555.5 3.6 557.8 4.0 558.5 5.0 C559.2 6.0 559.1 8.7 558.0 9.5 C556.9 10.3 553.4 10.8 552.0 10.0 C550.6 9.2 549.9 5.4 549.5 4.5Z" fill="#a3c9fb"/>
<path d="M518.3 149.8 L534.6 149.8 L534.6 155.5 L518.3 155.5Z" fill="#a3c9fb" />
<path d="M313.8 231.8 L320.0 231.4 L320.3 239.4 L314.0 239.8Z" fill="#a3c9fb" />
<path d="M546.6 2.5 C548.7 2.5 556.9 -12.1 559.0 2.5 C561.1 17.1 560.5 73.8 559.0 90.0 C557.5 106.2 553.0 97.4 550.0 100.0 C547.0 102.6 542.3 110.4 541.0 105.4 C539.7 100.5 540.8 79.1 542.2 70.3 C543.7 61.5 547.6 59.2 549.7 52.7 C551.8 46.2 554.7 38.1 554.7 31.4 C554.7 24.7 551.1 17.3 549.7 12.5 C548.4 7.7 547.1 4.2 546.6 2.5Z" fill="#c5e5a5"/>
<path d="M480.7 169.9 C483.0 168.7 489.3 164.0 494.5 162.4 C499.7 160.8 506.9 160.1 512.1 160.5 C517.3 160.9 523.4 160.6 525.9 164.9 C528.4 169.2 527.7 181.4 527.1 186.2 C526.5 191.0 524.2 191.3 522.1 193.8 C520.0 196.3 517.3 200.9 514.6 201.3 C511.9 201.7 509.2 198.0 505.8 196.3 C502.4 194.6 498.3 193.3 494.5 191.2 C490.7 189.1 485.5 187.2 483.2 183.7 C480.9 180.1 481.1 172.2 480.7 169.9Z" fill="#c5e5a5"/>
<path d="M459.3 144.5 L470.6 143.6 L470.6 154.8 L463.0 155.5 L460.0 151.0Z" fill="#c5e5a5" />
<path d="M541.0 131.0 C544.0 131.0 556.0 129.2 559.0 131.0 C562.0 132.8 560.8 140.7 559.0 142.0 C557.2 143.3 551.0 140.8 548.0 139.0 C545.0 137.2 542.2 132.3 541.0 131.0Z" fill="#c5e5a5"/>
<path d="M553.5 229.0 L559.0 229.0 L559.0 235.0 L553.5 235.0Z" fill="#c5e5a5" />
<path d="M83.0 41.2 L187.0 34.5 L331.5 26.8" stroke="#fff" stroke-width="2.6" fill="none" stroke-linecap="round" stroke-linejoin="round"/>
<path d="M286.0 28.4 L331.5 25.9" stroke="#fbead0" stroke-width="1.4" fill="none" stroke-linecap="round" stroke-linejoin="round"/>
<path d="M336.0 26.3 L372.0 24.3" stroke="#fff" stroke-width="1.6" fill="none" stroke-linecap="round" stroke-linejoin="round"/>
<path d="M100.0 152.1 L228.0 145.1" stroke="#fff" stroke-width="1.8" fill="none" stroke-linecap="round" stroke-linejoin="round"/>
<path d="M228.0 145.1 L338.0 139.1" stroke="#f8e4cf" stroke-width="2.2" fill="none" stroke-linecap="round" stroke-linejoin="round"/>
<path d="M338.0 139.1 L400.0 135.6" stroke="#fff" stroke-width="1.8" fill="none" stroke-linecap="round" stroke-linejoin="round"/>
<path d="M184 0L197.5 262" stroke="#d9ebc6" stroke-width="8.5"/>
<path d="M183.7 0L197.2 262" stroke="#fff" stroke-width="2.4"/>
<path d="M178.8 0L192.3 262M188.8 0L202.3 262" stroke="#fff" stroke-width="1.1"/>
<path d="M97.5 214.2 C102.8 214.0 121.9 212.6 129.3 213.2 C136.7 213.8 137.6 215.4 141.8 217.6 C146.0 219.8 150.0 224.2 154.4 226.4 C158.8 228.6 162.8 230.2 168.2 230.8 C173.6 231.4 183.9 230.2 187.0 230.1" stroke="#fff" stroke-width="2.4" fill="none" stroke-linecap="round" stroke-linejoin="round"/>
<path d="M168.2 231.0 L187.0 230.3 L215.9 228.5 L293.7 224.0 L343.9 222.0" stroke="#f9e8b4" stroke-width="3.4" fill="none" stroke-linecap="round" stroke-linejoin="round"/>
<path d="M343.9 222.0 L374.0 220.8 L414.0 219.0" stroke="#fff" stroke-width="3.2" fill="none" stroke-linecap="round" stroke-linejoin="round"/>
<path d="M170.0 231.5 C168.0 233.9 161.3 241.9 158.0 246.0 C154.7 250.1 151.8 253.3 150.0 256.0 C148.2 258.7 147.5 261.0 147.0 262.0" stroke="#f9e3a4" stroke-width="2.6" fill="none" stroke-linecap="round" stroke-linejoin="round"/>
<path d="M332.4 0.0 L346.8 262.0" stroke="#f8d879" stroke-width="3.0" fill="none" stroke-linecap="round" stroke-linejoin="round"/>
<path d="M434.5 0.0 C434.2 3.3 433.1 14.7 433.0 20.0 C432.9 25.3 432.2 28.0 434.0 32.0 C435.8 36.0 441.0 40.8 444.0 44.0 C447.0 47.2 449.0 50.4 452.0 51.5 C455.0 52.6 459.0 50.8 462.0 50.5 C465.0 50.2 465.8 49.2 470.0 50.0 C474.2 50.8 483.8 53.9 487.0 55.0 C490.2 56.1 488.7 56.2 489.0 56.5" stroke="#fff" stroke-width="2.6" fill="none" stroke-linecap="round" stroke-linejoin="round"/>
<path d="M489.0 56.5 C489.8 55.4 492.2 53.4 494.0 50.0 C495.8 46.6 498.0 41.3 500.0 36.0 C502.0 30.7 504.2 24.0 506.0 18.0 C507.8 12.0 510.2 3.0 511.0 0.0" stroke="#fff" stroke-width="2.2" fill="none" stroke-linecap="round" stroke-linejoin="round"/>
<path d="M452.0 51.5 C453.6 55.7 458.6 70.2 461.9 76.6 C465.2 83.0 470.0 86.1 472.0 90.0 C474.0 93.9 473.7 98.3 474.0 100.0" stroke="#fff" stroke-width="1.8" fill="none" stroke-linecap="round" stroke-linejoin="round"/>
<path d="M472.0 100.0 C476.6 100.3 492.3 100.6 499.5 101.6 C506.7 102.6 510.0 104.3 515.0 106.0 C520.0 107.7 524.6 112.0 529.6 111.7 C534.6 111.4 540.1 105.9 545.0 104.0 C549.9 102.1 556.7 101.1 559.0 100.5" stroke="#fff" stroke-width="3.0" fill="none" stroke-linecap="round" stroke-linejoin="round"/>
<path d="M529.6 111.7 C530.7 113.4 534.1 118.8 536.0 122.0 C537.9 125.2 539.0 127.7 541.0 131.0 C543.0 134.3 545.0 139.5 548.0 142.0 C551.0 144.5 557.2 145.3 559.0 146.0" stroke="#fff" stroke-width="2.4" fill="none" stroke-linecap="round" stroke-linejoin="round"/>
<path d="M472.0 100.0 C473.3 102.0 477.5 108.6 480.0 112.0 C482.5 115.4 485.2 117.3 487.0 120.5 C488.8 123.7 490.1 129.2 490.7 131.0" stroke="#fff" stroke-width="2.4" fill="none" stroke-linecap="round" stroke-linejoin="round"/>
<path d="M472.0 99.0 C469.1 101.5 460.4 108.9 454.3 114.2 C448.2 119.5 439.2 126.7 435.5 131.0 C431.8 135.3 432.6 138.5 432.0 140.0" stroke="#fff" stroke-width="2.0" fill="none" stroke-linecap="round" stroke-linejoin="round"/>
<path d="M374.0 217.6 C376.7 214.7 384.8 205.7 390.0 200.0 C395.2 194.3 401.2 187.9 405.4 183.7 C409.6 179.5 411.8 177.2 415.4 174.9 C418.9 172.6 420.2 171.4 426.7 169.9 C433.2 168.4 445.3 167.8 454.3 166.1 C463.3 164.4 474.2 163.0 480.7 159.9 C487.2 156.8 490.1 151.1 493.2 147.3 C496.3 143.5 497.4 140.0 499.5 137.3 C501.6 134.6 503.2 134.2 505.8 131.0 C508.4 127.8 511.0 121.2 515.0 118.0 C519.0 114.8 527.2 112.8 529.6 111.7" stroke="#fff" stroke-width="3.6" fill="none" stroke-linecap="round" stroke-linejoin="round"/>
<path d="M493.2 147.3 L490.7 131.0" stroke="#fff" stroke-width="2.2" fill="none" stroke-linecap="round" stroke-linejoin="round"/>
<path d="M420.4 157.4 L377.8 202.5" stroke="#f3e1c6" stroke-width="5.2" fill="none" stroke-linecap="round" stroke-linejoin="round"/>
<path d="M420.4 157.4 L377.8 202.5" stroke="#fff" stroke-width="0.8" fill="none" stroke-linecap="round" stroke-linejoin="round"/>
<path d="M434.2 131.0 C433.4 134.1 431.3 143.5 429.2 149.8 C427.1 156.1 424.0 164.4 421.7 168.6 C419.4 172.8 416.6 172.8 415.4 174.9 C414.1 177.0 414.3 176.2 414.2 181.2 C414.1 186.2 414.4 196.6 414.6 205.0 C414.8 213.4 412.8 223.9 415.4 231.4 C418.0 238.9 426.9 245.1 430.5 250.2 C434.1 255.3 435.7 260.0 436.7 262.0" stroke="#fff" stroke-width="2.4" fill="none" stroke-linecap="round" stroke-linejoin="round"/>
<path d="M484.4 256.5 C486.9 256.0 487.1 254.0 499.5 253.4 C511.9 252.8 549.1 252.8 559.0 252.7" stroke="#fff" stroke-width="2.6" fill="none" stroke-linecap="round" stroke-linejoin="round"/>
<path d="M346.0 243.0 C348.3 244.2 354.3 246.8 360.0 250.0 C365.7 253.2 376.7 260.0 380.0 262.0" stroke="#fff" stroke-width="2.2" fill="none" stroke-linecap="round" stroke-linejoin="round"/>
<path d="M344.0 222.0 C347.7 223.0 361.0 225.7 366.0 228.0 C371.0 230.3 372.7 234.7 374.0 236.0" stroke="#fff" stroke-width="1.4" fill="none" stroke-linecap="round" stroke-linejoin="round"/>
<path d="M83.5 59.9 L187.0 53.7 L200.8 53.0 L201.0 55.6 L205.6 55.3 L205.5 52.7 L257.9 50.2 L261.0 86.6 L293.7 84.7 L293.0 48.3 L376.5 44.5 L384.7 40.2 L380.3 32.6 L383.4 23.8 L390.3 23.2 L395.3 31.4 L399.7 40.8 L436.7 39.2 L450.6 59.0 L461.9 76.6 L473.1 87.9 L473.1 92.9 L469.4 99.1 L454.3 114.2 L435.5 131.0 L401.6 134.1 L395.3 154.8 L375.3 155.5 L377.1 192.5 L374.0 192.2 L312.5 195.0 L292.4 196.3 L287.4 193.8 L272.3 195.6 L259.8 200.7 L247.2 199.4 L237.2 198.1 L229.7 191.2 L224.0 189.4 L216.5 196.3 L221.5 203.8 L224.7 212.0 L216.5 215.1 L215.9 228.3 L187.0 231.4 L168.2 230.8 L154.4 226.4 L141.8 217.6 L129.3 213.2 L95.4 213.2 L80.3 214.5 L81.0 201.3 L79.0 190.0 L77.2 178.7 L79.0 162.4 L75.3 153.6 L74.0 131.0 L72.5 110.0 L72.3 84.0 L75.5 81.0 L84.5 78.5Z" fill="rgba(240,85,45,.075)" stroke="#ee766c" stroke-width=".85" stroke-linejoin="round"/>
<path d="M419.5 96.0 C419.4 95.2 418.4 92.5 419.0 91.5 C419.6 90.5 421.4 89.8 423.0 89.7 C424.6 89.6 427.6 89.9 428.5 91.0 C429.4 92.1 428.9 94.9 428.6 96.5 C428.4 98.1 428.2 99.8 427.0 100.5 C425.8 101.2 422.8 101.8 421.5 101.0 C420.2 100.2 419.8 96.8 419.5 96.0" fill="none" stroke="#ee6a60" stroke-width=".9"/>
<circle cx="226.5" cy="34.5" r="5" fill="#4a86f0" opacity=".22"/><circle cx="226.5" cy="34.5" r="3" fill="#3b7ded" stroke="#fff" stroke-width=".8"/>
<circle cx="107.3" cy="237.7" r="3.1" fill="#b18a68"/><circle cx="107.3" cy="237.9" r="1.5" fill="#f3e6d8"/>
<circle cx="225.3" cy="231" r="3.3" fill="#5965e0"/><circle cx="225.3" cy="231" r="1.7" fill="#dfe2fb"/>
<circle cx="486.3" cy="76.6" r="3.2" fill="#e0463c"/><text x="486.3" y="78.5" font-size="5" font-weight="700" fill="#fff" text-anchor="middle">H</text>
<circle cx="369.6" cy="5.6" r="3.6" fill="#7bb661"/><circle cx="369.6" cy="5.6" r="1.5" fill="#e2f0d8"/>
<circle cx="359.2" cy="6.9" r="2.9" fill="#b08968"/><circle cx="359.2" cy="6.9" r="1.3" fill="#f3e6d8"/>
<circle cx="340.7" cy="159.2" r="4.2" fill="#fff" stroke="#8a8a8a" stroke-width=".9"/><text x="340.7" y="161.2" font-size="5" font-weight="700" fill="#555" text-anchor="middle">1</text>
<rect x="143" y="233.3" width="6.4" height="6.4" rx="1" fill="#2bb7ea"/><rect x="144.7" y="234.8" width="3" height="3" fill="#e8f7fd"/>
<text x="165.7" y="17.3" font-size="6.6" fill="#8b7d62" text-anchor="start" textLength="57.7" lengthAdjust="spacing" stroke="#fff" stroke-opacity=".55" stroke-width=".8" paint-order="stroke">OUTER SUNSET</text>
<text x="221.1" y="104.4" font-size="6.6" fill="#8b7d62" text-anchor="start" textLength="68.6" lengthAdjust="spacing" stroke="#fff" stroke-opacity=".55" stroke-width=".8" paint-order="stroke">SUNSET DISTRICT</text>
<text x="323.8" y="124.6" font-size="6.6" fill="#8b7d62" text-anchor="start" textLength="64.0" lengthAdjust="spacing" stroke="#fff" stroke-opacity=".55" stroke-width=".8" paint-order="stroke">INNER PARKSIDE</text>
<text x="397.8" y="98.6" font-size="6.6" fill="#8b7d62" text-anchor="start" textLength="49.0" lengthAdjust="spacing" stroke="#fff" stroke-opacity=".55" stroke-width=".8" paint-order="stroke">FOREST HILL</text>
<text x="373.3" y="154.3" font-size="6.6" fill="#8b7d62" text-anchor="start" textLength="54.3" lengthAdjust="spacing" stroke="#fff" stroke-opacity=".55" stroke-width=".8" paint-order="stroke">WEST PORTAL</text>
<text x="483.2" y="179.8" font-size="6.6" fill="#8b7d62" text-anchor="start" textLength="54.0" lengthAdjust="spacing" stroke="#fff" stroke-opacity=".55" stroke-width=".8" paint-order="stroke">MT DAVIDSON</text>
<text x="468.1" y="234.6" font-size="6.6" fill="#8b7d62" text-anchor="start" textLength="43.9" lengthAdjust="spacing" stroke="#fff" stroke-opacity=".55" stroke-width=".8" paint-order="stroke">WESTWOOD</text>
<text x="468.1" y="242.5" font-size="6.6" fill="#8b7d62" text-anchor="start" textLength="43.9" lengthAdjust="spacing" stroke="#fff" stroke-opacity=".55" stroke-width=".8" paint-order="stroke">HIGHLANDS</text>
<text x="537.0" y="27.7" font-size="6.6" fill="#8b7d62" text-anchor="start" textLength="19.0" lengthAdjust="spacing" stroke="#fff" stroke-opacity=".55" stroke-width=".8" paint-order="stroke">TWIN</text>
<text x="375.9" y="7.6" font-size="7.2" fill="#5f9b48" text-anchor="start" font-style="italic" textLength="51.4" lengthAdjust="spacing" stroke="#fff" stroke-opacity=".55" stroke-width=".8" paint-order="stroke">Grandview Park</text>
<text x="542.8" y="46.5" font-size="7.2" fill="#5f9b48" text-anchor="start" font-style="italic" stroke="#fff" stroke-opacity=".55" stroke-width=".8" paint-order="stroke">Twin</text>
<text x="335.0" y="209.5" font-size="7.4" fill="#5f9b48" text-anchor="middle" font-style="italic" stroke="#fff" stroke-opacity=".55" stroke-width=".8" paint-order="stroke">Sigmund Stern</text>
<text x="335.0" y="218.2" font-size="7.4" fill="#5f9b48" text-anchor="middle" font-style="italic" stroke="#fff" stroke-opacity=".55" stroke-width=".8" paint-order="stroke">Recreation</text>
<text x="335.0" y="226.5" font-size="7.4" fill="#5f9b48" text-anchor="middle" font-style="italic" stroke="#fff" stroke-opacity=".55" stroke-width=".8" paint-order="stroke">Grove</text>
<text x="503.9" y="193.6" font-size="7.2" fill="#5f9b48" text-anchor="start" font-style="italic" textLength="43.3" lengthAdjust="spacing" stroke="#fff" stroke-opacity=".55" stroke-width=".8" paint-order="stroke">Mt. Davidson</text>
<text x="232.2" y="37.2" font-size="7.2" fill="#c8843c" text-anchor="start" textLength="27.0" lengthAdjust="spacing" stroke="#fff" stroke-opacity=".55" stroke-width=".8" paint-order="stroke">TJ Cups</text>
<text x="38.3" y="239.8" font-size="7.3" fill="#877d74" text-anchor="start" textLength="62.7" lengthAdjust="spacing" stroke="#fff" stroke-opacity=".55" stroke-width=".8" paint-order="stroke">San Francisco Zoo</text>
<text x="230.9" y="229.0" font-size="7.5" fill="#4d5bd8" text-anchor="start" textLength="60.3" lengthAdjust="spacing" stroke="#fff" stroke-opacity=".55" stroke-width=".8" paint-order="stroke">FedEx Office Print</text>
<text x="230.9" y="237.2" font-size="7.5" fill="#4d5bd8" text-anchor="start" textLength="45.1" lengthAdjust="spacing" stroke="#fff" stroke-opacity=".55" stroke-width=".8" paint-order="stroke">&amp; Ship Center</text>
<text x="492.0" y="74.8" font-size="7.4" fill="#b3473e" text-anchor="start" stroke="#fff" stroke-opacity=".55" stroke-width=".8" paint-order="stroke">Laguna Honda Hospital</text>
<text x="492.0" y="82.9" font-size="7.4" fill="#b3473e" text-anchor="start" stroke="#fff" stroke-opacity=".55" stroke-width=".8" paint-order="stroke">and Rehabilitation Center</text>
<text x="86.6" y="4.5" font-size="5.6" fill="#8a8a8a" text-anchor="start" textLength="22.6" lengthAdjust="spacing" stroke="#fff" stroke-opacity=".55" stroke-width=".8" paint-order="stroke" transform="rotate(-3 86.6 4.5)">Lawton St</text>
<text x="89.1" y="42.3" font-size="5.6" fill="#8a8a8a" text-anchor="start" textLength="27.6" lengthAdjust="spacing" stroke="#fff" stroke-opacity=".55" stroke-width=".8" paint-order="stroke" transform="rotate(-3 89.1 42.3)">Noriega St</text>
<text x="91.6" y="60.8" font-size="5.6" fill="#8a8a8a" text-anchor="start" textLength="22.0" lengthAdjust="spacing" stroke="#fff" stroke-opacity=".55" stroke-width=".8" paint-order="stroke" transform="rotate(-3 91.6 60.8)">Ortega St</text>
<text x="93.5" y="79.2" font-size="5.6" fill="#8a8a8a" text-anchor="start" textLength="26.4" lengthAdjust="spacing" stroke="#fff" stroke-opacity=".55" stroke-width=".8" paint-order="stroke" transform="rotate(-3 93.5 79.2)">Pacheco St</text>
<text x="194.8" y="73.2" font-size="5.6" fill="#8a8a8a" text-anchor="start" textLength="27.1" lengthAdjust="spacing" stroke="#fff" stroke-opacity=".55" stroke-width=".8" paint-order="stroke" transform="rotate(-3 194.8 73.2)">Pacheco St</text>
<text x="101.7" y="152.8" font-size="5.6" fill="#8a8a8a" text-anchor="start" textLength="25.7" lengthAdjust="spacing" stroke="#fff" stroke-opacity=".55" stroke-width=".8" paint-order="stroke" transform="rotate(-3 101.7 152.8)">Taraval St</text>
<text x="102.9" y="171.8" font-size="5.6" fill="#8a8a8a" text-anchor="start" textLength="18.2" lengthAdjust="spacing" stroke="#fff" stroke-opacity=".55" stroke-width=".8" paint-order="stroke" transform="rotate(-3 102.9 171.8)">Ulloa St</text>
<text x="106.7" y="208.6" font-size="5.6" fill="#8a8a8a" text-anchor="start" textLength="27.0" lengthAdjust="spacing" stroke="#fff" stroke-opacity=".55" stroke-width=".8" paint-order="stroke" transform="rotate(-3 106.7 208.6)">Wawona St</text>
<text x="102.3" y="216.6" font-size="5.6" fill="#8a8a8a" text-anchor="start" textLength="25.7" lengthAdjust="spacing" stroke="#fff" stroke-opacity=".55" stroke-width=".8" paint-order="stroke" transform="rotate(-3 102.3 216.6)">Sloat Blvd</text>
<text x="200.2" y="148.8" font-size="5.6" fill="#8a8a8a" text-anchor="start" textLength="27.0" lengthAdjust="spacing" stroke="#fff" stroke-opacity=".55" stroke-width=".8" paint-order="stroke" transform="rotate(-3 200.2 148.8)">Taraval St</text>
<text x="349.5" y="138.8" font-size="5.6" fill="#8a8a8a" text-anchor="start" textLength="26.5" lengthAdjust="spacing" stroke="#fff" stroke-opacity=".55" stroke-width=".8" paint-order="stroke" transform="rotate(-3 349.5 138.8)">Taraval St</text>
<text x="241.0" y="219.8" font-size="5.6" fill="#8a8a8a" text-anchor="start" textLength="27.6" lengthAdjust="spacing" stroke="#fff" stroke-opacity=".55" stroke-width=".8" paint-order="stroke" transform="rotate(-3 241.0 219.8)">Crestlake Dr</text>
<text x="259.8" y="247.2" font-size="5.6" fill="#8a8a8a" text-anchor="start" textLength="25.1" lengthAdjust="spacing" stroke="#fff" stroke-opacity=".55" stroke-width=".8" paint-order="stroke" transform="rotate(-3 259.8 247.2)">Ocean Ave</text>
<text x="535.9" y="239.2" font-size="5.6" fill="#8a8a8a" text-anchor="start" textLength="30.1" lengthAdjust="spacing" stroke="#fff" stroke-opacity=".55" stroke-width=".8" paint-order="stroke" transform="rotate(-3 535.9 239.2)">Mangels Ave</text>
<text x="223.4" y="258.5" font-size="5.6" fill="#8a8a8a" text-anchor="start" textLength="31.4" lengthAdjust="spacing" stroke="#fff" stroke-opacity=".55" stroke-width=".8" paint-order="stroke" transform="rotate(5 223.4 258.5)">Eucalyptus Dr</text>
<text x="128.7" y="47.0" font-size="5.6" fill="#8a8a8a" text-anchor="start" textLength="20.8" lengthAdjust="spacing" stroke="#fff" stroke-opacity=".55" stroke-width=".8" paint-order="stroke" transform="rotate(87 128.7 47.0)">43rd Ave</text>
<text x="137.5" y="47.0" font-size="5.6" fill="#8a8a8a" text-anchor="start" textLength="20.8" lengthAdjust="spacing" stroke="#fff" stroke-opacity=".55" stroke-width=".8" paint-order="stroke" transform="rotate(87 137.5 47.0)">42nd Ave</text>
<text x="146.3" y="47.0" font-size="5.6" fill="#8a8a8a" text-anchor="start" textLength="20.8" lengthAdjust="spacing" stroke="#fff" stroke-opacity=".55" stroke-width=".8" paint-order="stroke" transform="rotate(87 146.3 47.0)">41st Ave</text>
<text x="135.0" y="158.6" font-size="5.6" fill="#8a8a8a" text-anchor="start" textLength="20.1" lengthAdjust="spacing" stroke="#fff" stroke-opacity=".55" stroke-width=".8" paint-order="stroke" transform="rotate(87 135.0 158.6)">43rd Ave</text>
<text x="143.8" y="158.6" font-size="5.6" fill="#8a8a8a" text-anchor="start" textLength="20.1" lengthAdjust="spacing" stroke="#fff" stroke-opacity=".55" stroke-width=".8" paint-order="stroke" transform="rotate(87 143.8 158.6)">42nd Ave</text>
<text x="151.9" y="158.6" font-size="5.6" fill="#8a8a8a" text-anchor="start" textLength="20.1" lengthAdjust="spacing" stroke="#fff" stroke-opacity=".55" stroke-width=".8" paint-order="stroke" transform="rotate(87 151.9 158.6)">41st Ave</text>
<text x="160.1" y="158.6" font-size="5.6" fill="#8a8a8a" text-anchor="start" textLength="20.1" lengthAdjust="spacing" stroke="#fff" stroke-opacity=".55" stroke-width=".8" paint-order="stroke" transform="rotate(87 160.1 158.6)">40th Ave</text>
<text x="168.9" y="158.6" font-size="5.6" fill="#8a8a8a" text-anchor="start" textLength="20.1" lengthAdjust="spacing" stroke="#fff" stroke-opacity=".55" stroke-width=".8" paint-order="stroke" transform="rotate(87 168.9 158.6)">39th Ave</text>
<text x="177.7" y="158.6" font-size="5.6" fill="#8a8a8a" text-anchor="start" textLength="20.1" lengthAdjust="spacing" stroke="#fff" stroke-opacity=".55" stroke-width=".8" paint-order="stroke" transform="rotate(87 177.7 158.6)">38th Ave</text>
<text x="128.1" y="176.0" font-size="5.6" fill="#8a8a8a" text-anchor="start" textLength="20.0" lengthAdjust="spacing" stroke="#fff" stroke-opacity=".55" stroke-width=".8" paint-order="stroke" transform="rotate(87 128.1 176.0)">44th Ave</text>
<text x="202.8" y="154.8" font-size="5.6" fill="#8a8a8a" text-anchor="start" textLength="20.2" lengthAdjust="spacing" stroke="#fff" stroke-opacity=".55" stroke-width=".8" paint-order="stroke" transform="rotate(87 202.8 154.8)">35th Ave</text>
<text x="228.5" y="153.0" font-size="5.6" fill="#8a8a8a" text-anchor="start" textLength="22.0" lengthAdjust="spacing" stroke="#fff" stroke-opacity=".55" stroke-width=".8" paint-order="stroke" transform="rotate(87 228.5 153.0)">32nd Ave</text>
<text x="245.4" y="152.3" font-size="5.6" fill="#8a8a8a" text-anchor="start" textLength="20.1" lengthAdjust="spacing" stroke="#fff" stroke-opacity=".55" stroke-width=".8" paint-order="stroke" transform="rotate(87 245.4 152.3)">30th Ave</text>
<text x="253.0" y="152.3" font-size="5.6" fill="#8a8a8a" text-anchor="start" textLength="20.1" lengthAdjust="spacing" stroke="#fff" stroke-opacity=".55" stroke-width=".8" paint-order="stroke" transform="rotate(87 253.0 152.3)">29th Ave</text>
<text x="261.8" y="151.0" font-size="5.6" fill="#8a8a8a" text-anchor="start" textLength="20.8" lengthAdjust="spacing" stroke="#fff" stroke-opacity=".55" stroke-width=".8" paint-order="stroke" transform="rotate(87 261.8 151.0)">28th Ave</text>
<text x="278.7" y="149.8" font-size="5.6" fill="#8a8a8a" text-anchor="start" textLength="20.7" lengthAdjust="spacing" stroke="#fff" stroke-opacity=".55" stroke-width=".8" paint-order="stroke" transform="rotate(87 278.7 149.8)">26th Ave</text>
<text x="287.5" y="149.8" font-size="5.6" fill="#8a8a8a" text-anchor="start" textLength="20.7" lengthAdjust="spacing" stroke="#fff" stroke-opacity=".55" stroke-width=".8" paint-order="stroke" transform="rotate(87 287.5 149.8)">25th Ave</text>
<text x="295.6" y="149.2" font-size="5.6" fill="#8a8a8a" text-anchor="start" textLength="20.8" lengthAdjust="spacing" stroke="#fff" stroke-opacity=".55" stroke-width=".8" paint-order="stroke" transform="rotate(87 295.6 149.2)">24th Ave</text>
<text x="303.8" y="149.0" font-size="5.6" fill="#8a8a8a" text-anchor="start" textLength="21.0" lengthAdjust="spacing" stroke="#fff" stroke-opacity=".55" stroke-width=".8" paint-order="stroke" transform="rotate(87 303.8 149.0)">23rd Ave</text>
<text x="312.6" y="148.6" font-size="5.6" fill="#8a8a8a" text-anchor="start" textLength="21.9" lengthAdjust="spacing" stroke="#fff" stroke-opacity=".55" stroke-width=".8" paint-order="stroke" transform="rotate(87 312.6 148.6)">22nd Ave</text>
<text x="334.6" y="234.5" font-size="5.6" fill="#8a8a8a" text-anchor="start" textLength="20.5" lengthAdjust="spacing" stroke="#fff" stroke-opacity=".55" stroke-width=".8" paint-order="stroke" transform="rotate(87 334.6 234.5)">20th Ave</text>
<text x="366.6" y="45.0" font-size="5.6" fill="#8a8a8a" text-anchor="start" textLength="17.8" lengthAdjust="spacing" stroke="#fff" stroke-opacity=".55" stroke-width=".8" paint-order="stroke" transform="rotate(87 366.6 45.0)">15th Ave</text>
<text x="376.0" y="37.7" font-size="5.6" fill="#8a8a8a" text-anchor="start" textLength="20.0" lengthAdjust="spacing" stroke="#fff" stroke-opacity=".55" stroke-width=".8" paint-order="stroke" transform="rotate(87 376.0 37.7)">14th Ave</text>
<text x="72.3" y="-8.0" font-size="6" fill="#8a8a8a" text-anchor="start" textLength="33.0" lengthAdjust="spacing" stroke="#fff" stroke-opacity=".55" stroke-width=".8" paint-order="stroke" transform="rotate(83 72.3 -8.0)">Great Hwy</text>
<text x="82.5" y="99.0" font-size="6" fill="#8a8a8a" text-anchor="start" textLength="26.5" lengthAdjust="spacing" stroke="#fff" stroke-opacity=".55" stroke-width=".8" paint-order="stroke" transform="rotate(83 82.5 99.0)">Great Hwy</text>
<text x="90.7" y="178.0" font-size="6" fill="#8a8a8a" text-anchor="start" textLength="27.0" lengthAdjust="spacing" stroke="#fff" stroke-opacity=".55" stroke-width=".8" paint-order="stroke" transform="rotate(83 90.7 178.0)">Great Hwy</text>
<text x="187.8" y="91.6" font-size="6" fill="#8a8a8a" text-anchor="start" textLength="31.4" lengthAdjust="spacing" stroke="#fff" stroke-opacity=".55" stroke-width=".8" paint-order="stroke" transform="rotate(87 187.8 91.6)">Sunset Blvd</text>
<text x="436.0" y="43.5" font-size="6" fill="#8a8a8a" text-anchor="start" textLength="51.1" lengthAdjust="spacing" stroke="#fff" stroke-opacity=".55" stroke-width=".8" paint-order="stroke" transform="rotate(53.4 436.0 43.5)">Laguna Honda Blvd</text>
<text x="441.8" y="127.0" font-size="5.6" fill="#8a8a8a" text-anchor="start" textLength="31.9" lengthAdjust="spacing" stroke="#fff" stroke-opacity=".55" stroke-width=".8" paint-order="stroke" transform="rotate(-44.9 441.8 127.0)">Dewey Blvd</text>
<text x="411.0" y="128.5" font-size="5.6" fill="#8a8a8a" text-anchor="start" textLength="31.1" lengthAdjust="spacing" stroke="#fff" stroke-opacity=".55" stroke-width=".8" paint-order="stroke" transform="rotate(-21.7 411.0 128.5)">Magellan Ave</text>
<text x="391.5" y="47.5" font-size="5.6" fill="#8a8a8a" text-anchor="start" textLength="26.4" lengthAdjust="spacing" stroke="#fff" stroke-opacity=".55" stroke-width=".8" paint-order="stroke" transform="rotate(37.3 391.5 47.5)">Pacheco St</text>
<text x="495.5" y="42.0" font-size="5.6" fill="#8a8a8a" text-anchor="start" textLength="39.8" lengthAdjust="spacing" stroke="#fff" stroke-opacity=".55" stroke-width=".8" paint-order="stroke" transform="rotate(-64.7 495.5 42.0)">Clarendon Ave</text>
<text x="507.5" y="132.5" font-size="5.6" fill="#8a8a8a" text-anchor="start" textLength="25.3" lengthAdjust="spacing" stroke="#fff" stroke-opacity=".55" stroke-width=".8" paint-order="stroke" transform="rotate(-37.8 507.5 132.5)">Portola Dr</text>
<text x="454.5" y="168.5" font-size="5.6" fill="#8a8a8a" text-anchor="start" textLength="25.8" lengthAdjust="spacing" stroke="#fff" stroke-opacity=".55" stroke-width=".8" paint-order="stroke" transform="rotate(-14.6 454.5 168.5)">Portola Dr</text>
<text x="386.5" y="210.5" font-size="5.6" fill="#8a8a8a" text-anchor="start" textLength="26.5" lengthAdjust="spacing" stroke="#fff" stroke-opacity=".55" stroke-width=".8" paint-order="stroke" transform="rotate(-45.8 386.5 210.5)">Portola Dr</text>
<text x="425.0" y="193.0" font-size="5.6" fill="#8a8a8a" text-anchor="start" textLength="41.4" lengthAdjust="spacing" stroke="#fff" stroke-opacity=".55" stroke-width=".8" paint-order="stroke" transform="rotate(37.1 425.0 193.0)">Yerba Buena Ave</text>
<text x="379.0" y="195.5" font-size="5.6" fill="#8a8a8a" text-anchor="start" textLength="26.9" lengthAdjust="spacing" stroke="#fff" stroke-opacity=".55" stroke-width=".8" paint-order="stroke" transform="rotate(-48.0 379.0 195.5)">Wawona St</text>
<text x="528.0" y="137.0" font-size="5.6" fill="#8a8a8a" text-anchor="start" textLength="30.7" lengthAdjust="spacing" stroke="#fff" stroke-opacity=".55" stroke-width=".8" paint-order="stroke" transform="rotate(52.9 528.0 137.0)">Teresita Blvd</text>
<text x="354.0" y="250.0" font-size="5.6" fill="#8a8a8a" text-anchor="start" textLength="23.3" lengthAdjust="spacing" stroke="#fff" stroke-opacity=".55" stroke-width=".8" paint-order="stroke" transform="rotate(31.0 354.0 250.0)">Ocean Ave</text>
<text x="463.0" y="263.5" font-size="5.6" fill="#8a8a8a" text-anchor="start" textLength="23.3" lengthAdjust="spacing" stroke="#fff" stroke-opacity=".55" stroke-width=".8" paint-order="stroke" transform="rotate(-9.9 463.0 263.5)">Monterey Blvd</text>
</g></svg>
  </div>
</div>
<!-- overlay items in page coords -->
<div class="ul" style="left:671px;top:344px;width:164px;height:4px"></div>
<div class="ul" style="left:867px;top:344px;width:121px;height:4px"></div>
<div class="ul" style="left:1136px;top:344px;width:164px;height:4px"></div>
<div class="tri" style="left:806px;top:323px"></div>
<div class="tri" style="left:1271px;top:322px"></div>
<div class="ul" style="left:277px;top:494px;width:104px;height:2px"></div>
<div class="ul" style="left:582px;top:494px;width:176px;height:2px"></div>
<div class="tri s" style="left:365px;top:479px"></div>
<div class="tri s" style="left:735px;top:479px"></div>
<div class="ul" style="left:252px;top:571px;width:519px;height:1px;background:#8c8c8c"></div>
<div id="txt" style="position:absolute;left:0;top:0;width:1670px;height:1044px;will-change:transform">
<span class="t" style="left:160.7px;top:184.0px;font-size:17.7px;font-weight:400;color:#666a70;letter-spacing:2.55px">Logo</span>
<span class="t" style="left:1249.0px;top:175.2px;font-size:13.4px;font-weight:400;color:#6a6a6a;letter-spacing:2.14px">icon</span>
<span class="t" style="left:1369.0px;top:175.2px;font-size:13.4px;font-weight:400;color:#6a6a6a;letter-spacing:2.14px">icon</span>
<span class="t" style="left:1469.0px;top:176.3px;font-size:13.4px;font-weight:400;color:#6a6a6a;letter-spacing:2.14px">icon</span>
<span class="t" style="left:1228.8px;top:212.3px;font-size:16.2px;font-weight:700;color:#1a8fd6;letter-spacing:3.05px">Metrics</span>
<span class="t" style="left:1364.0px;top:212.5px;font-size:16px;font-weight:400;color:#2b3038;letter-spacing:3.44px">Map</span>
<span class="t" style="left:1455.8px;top:212.5px;font-size:16px;font-weight:400;color:#2b3038;letter-spacing:3.49px">Blank</span>
<span class="t" style="left:232.5px;top:317.2px;font-size:18.7px;font-weight:400;color:#333;letter-spacing:2.31px">Show the value SBA has provided in the</span>
<span class="t" style="left:700.3px;top:317.2px;font-size:18.7px;font-weight:400;color:#9b9b9b;letter-spacing:2.59px">Zipcode</span>
<span class="t" style="left:895.0px;top:317.2px;font-size:18.7px;font-weight:400;color:#9b9b9b;letter-spacing:2.61px">94116</span>
<span class="t" style="left:1003.5px;top:317.2px;font-size:18.7px;font-weight:400;color:#333;letter-spacing:2.70px">in the last</span>
<span class="t" style="left:1163.0px;top:317.2px;font-size:18.7px;font-weight:400;color:#9b9b9b;letter-spacing:2.04px">10 years</span>
<span class="t" style="left:1347.3px;top:316.2px;font-size:18.7px;font-weight:700;color:#fff;letter-spacing:2.33px">Submit</span>
<span class="t" style="left:232.8px;top:426.7px;font-size:20.4px;font-weight:700;color:#3a3a3a;letter-spacing:3.03px">Rank Header</span>
<span class="t" style="left:897.7px;top:426.7px;font-size:20.4px;font-weight:700;color:#3a3a3a;letter-spacing:3.05px">Map Header</span>
<span class="t" style="left:232.0px;top:475.5px;font-size:14.8px;font-weight:400;color:#333;letter-spacing:1.73px">View</span>
<span class="t" style="left:296.8px;top:474.7px;font-size:14.5px;font-weight:700;color:#9b9b9b;letter-spacing:1.47px">Top 10</span>
<span class="t" style="left:390.1px;top:475.5px;font-size:14.8px;font-weight:400;color:#333;letter-spacing:1.84px">businesses ranked by</span>
<span class="t" style="left:601.8px;top:474.7px;font-size:14.5px;font-weight:700;color:#9b9b9b;letter-spacing:1.84px">Jobs Provided</span>
<span class="t" style="left:258.2px;top:548.1px;font-size:11.2px;font-weight:700;color:#9b9b9b;letter-spacing:1.88px">Rank</span>
<span class="t" style="left:342.4px;top:548.1px;font-size:11.2px;font-weight:700;color:#9b9b9b;letter-spacing:1.32px">Business</span>
<span class="t" style="left:443.0px;top:548.1px;font-size:11.2px;font-weight:700;color:#1a8fd6;letter-spacing:1.58px">Jobs Provided</span>
<span class="t" style="left:567.4px;top:548.1px;font-size:11.2px;font-weight:700;color:#9b9b9b;letter-spacing:1.62px"># of Loans</span>
<span class="t" style="left:674.9px;top:548.1px;font-size:11.2px;font-weight:700;color:#9b9b9b;letter-spacing:1.77px">Dollar Value</span>
<span class="t" style="left:910.5px;top:750.0px;font-size:11.8px;font-weight:400;color:#333;letter-spacing:1.64px">Buttons or text related to the small map can be placed here.</span>
<span class="t" style="left:271.0px;top:593.5px;font-size:11.2px;font-weight:400;color:#333;letter-spacing:0.00px">1</span>
<span class="t" style="left:330.8px;top:593.5px;font-size:11.2px;font-weight:400;color:#333;letter-spacing:2.07px">Lorem Ipsum</span>
<span class="t" style="left:488.1px;top:593.5px;font-size:11.2px;font-weight:400;color:#333;letter-spacing:0.00px">X</span>
<span class="t" style="left:601.1px;top:593.5px;font-size:11.2px;font-weight:400;color:#333;letter-spacing:0.00px">X</span>
<span class="t" style="left:714.1px;top:593.5px;font-size:11.2px;font-weight:400;color:#333;letter-spacing:0.00px">X</span>
<span class="t" style="left:271.5px;top:623.5px;font-size:11.2px;font-weight:400;color:#333;letter-spacing:0.00px">2</span>
<span class="t" style="left:330.8px;top:623.5px;font-size:11.2px;font-weight:400;color:#333;letter-spacing:2.07px">Lorem Ipsum</span>
<span class="t" style="left:488.1px;top:623.5px;font-size:11.2px;font-weight:400;color:#333;letter-spacing:0.00px">X</span>
<span class="t" style="left:601.1px;top:623.5px;font-size:11.2px;font-weight:400;color:#333;letter-spacing:0.00px">X</span>
<span class="t" style="left:714.1px;top:623.5px;font-size:11.2px;font-weight:400;color:#333;letter-spacing:0.00px">X</span>
<span class="t" style="left:271.0px;top:653.5px;font-size:11.2px;font-weight:400;color:#333;letter-spacing:0.00px">3</span>
<span class="t" style="left:330.8px;top:653.5px;font-size:11.2px;font-weight:400;color:#333;letter-spacing:2.07px">Lorem Ipsum</span>
<span class="t" style="left:488.1px;top:653.5px;font-size:11.2px;font-weight:400;color:#333;letter-spacing:0.00px">X</span>
<span class="t" style="left:601.1px;top:653.5px;font-size:11.2px;font-weight:400;color:#333;letter-spacing:0.00px">X</span>
<span class="t" style="left:714.1px;top:653.5px;font-size:11.2px;font-weight:400;color:#333;letter-spacing:0.00px">X</span>
<span class="t" style="left:271.0px;top:683.5px;font-size:11.2px;font-weight:400;color:#333;letter-spacing:0.00px">4</span>
<span class="t" style="left:330.8px;top:683.5px;font-size:11.2px;font-weight:400;color:#333;letter-spacing:2.07px">Lorem Ipsum</span>
<span class="t" style="left:488.1px;top:683.5px;font-size:11.2px;font-weight:400;color:#333;letter-spacing:0.00px">X</span>
<span class="t" style="left:601.1px;top:683.5px;font-size:11.2px;font-weight:400;color:#333;letter-spacing:0.00px">X</span>
<span class="t" style="left:714.1px;top:683.5px;font-size:11.2px;font-weight:400;color:#333;letter-spacing:0.00px">X</span>
<span class="t" style="left:271.0px;top:713.5px;font-size:11.2px;font-weight:400;color:#333;letter-spacing:0.00px">5</span>
<span class="t" style="left:330.8px;top:713.5px;font-size:11.2px;font-weight:400;color:#333;letter-spacing:2.07px">Lorem Ipsum</span>
<span class="t" style="left:488.1px;top:713.5px;font-size:11.2px;font-weight:400;color:#333;letter-spacing:0.00px">X</span>
<span class="t" style="left:601.1px;top:713.5px;font-size:11.2px;font-weight:400;color:#333;letter-spacing:0.00px">X</span>
<span class="t" style="left:714.1px;top:713.5px;font-size:11.2px;font-weight:400;color:#333;letter-spacing:0.00px">X</span>
<span class="t" style="left:271.0px;top:743.5px;font-size:11.2px;font-weight:400;color:#333;letter-spacing:0.00px">6</span>
<span class="t" style="left:330.8px;top:743.5px;font-size:11.2px;font-weight:400;color:#333;letter-spacing:2.07px">Lorem Ipsum</span>
<span class="t" style="left:488.1px;top:743.5px;font-size:11.2px;font-weight:400;color:#333;letter-spacing:0.00px">X</span>
<span class="t" style="left:601.1px;top:743.5px;font-size:11.2px;font-weight:400;color:#333;letter-spacing:0.00px">X</span>
<span class="t" style="left:714.1px;top:743.5px;font-size:11.2px;font-weight:400;color:#333;letter-spacing:0.00px">X</span>
<span class="t" style="left:271.5px;top:773.5px;font-size:11.2px;font-weight:400;color:#333;letter-spacing:0.00px">7</span>
<span class="t" style="left:330.8px;top:773.5px;font-size:11.2px;font-weight:400;color:#333;letter-spacing:2.07px">Lorem Ipsum</span>
<span class="t" style="left:488.1px;top:773.5px;font-size:11.2px;font-weight:400;color:#333;letter-spacing:0.00px">X</span>
<span class="t" style="left:601.1px;top:773.5px;font-size:11.2px;font-weight:400;color:#333;letter-spacing:0.00px">X</span>
<span class="t" style="left:714.1px;top:773.5px;font-size:11.2px;font-weight:400;color:#333;letter-spacing:0.00px">X</span>
<span class="t" style="left:271.0px;top:803.5px;font-size:11.2px;font-weight:400;color:#333;letter-spacing:0.00px">8</span>
<span class="t" style="left:330.8px;top:803.5px;font-size:11.2px;font-weight:400;color:#333;letter-spacing:2.07px">Lorem Ipsum</span>
<span class="t" style="left:488.1px;top:803.5px;font-size:11.2px;font-weight:400;color:#333;letter-spacing:0.00px">X</span>
<span class="t" style="left:601.1px;top:803.5px;font-size:11.2px;font-weight:400;color:#333;letter-spacing:0.00px">X</span>
<span class="t" style="left:714.1px;top:803.5px;font-size:11.2px;font-weight:400;color:#333;letter-spacing:0.00px">X</span>
<span class="t" style="left:271.0px;top:833.5px;font-size:11.2px;font-weight:400;color:#333;letter-spacing:0.00px">9</span>
<span class="t" style="left:330.8px;top:833.5px;font-size:11.2px;font-weight:400;color:#333;letter-spacing:2.07px">Lorem Ipsum</span>
<span class="t" style="left:488.1px;top:833.5px;font-size:11.2px;font-weight:400;color:#333;letter-spacing:0.00px">X</span>
<span class="t" style="left:601.1px;top:833.5px;font-size:11.2px;font-weight:400;color:#333;letter-spacing:0.00px">X</span>
<span class="t" style="left:714.1px;top:833.5px;font-size:11.2px;font-weight:400;color:#333;letter-spacing:0.00px">X</span>
<span class="t" style="left:271.0px;top:863.5px;font-size:11.2px;font-weight:400;color:#333;letter-spacing:0.00px">9</span>
<span class="t" style="left:330.8px;top:863.5px;font-size:11.2px;font-weight:400;color:#333;letter-spacing:2.07px">Lorem Ipsum</span>
<span class="t" style="left:488.1px;top:863.5px;font-size:11.2px;font-weight:400;color:#333;letter-spacing:0.00px">X</span>
<span class="t" style="left:601.1px;top:863.5px;font-size:11.2px;font-weight:400;color:#333;letter-spacing:0.00px">X</span>
<span class="t" style="left:714.1px;top:863.5px;font-size:11.2px;font-weight:400;color:#333;letter-spacing:0.00px">X</span>
</div>
</body>
</html>
